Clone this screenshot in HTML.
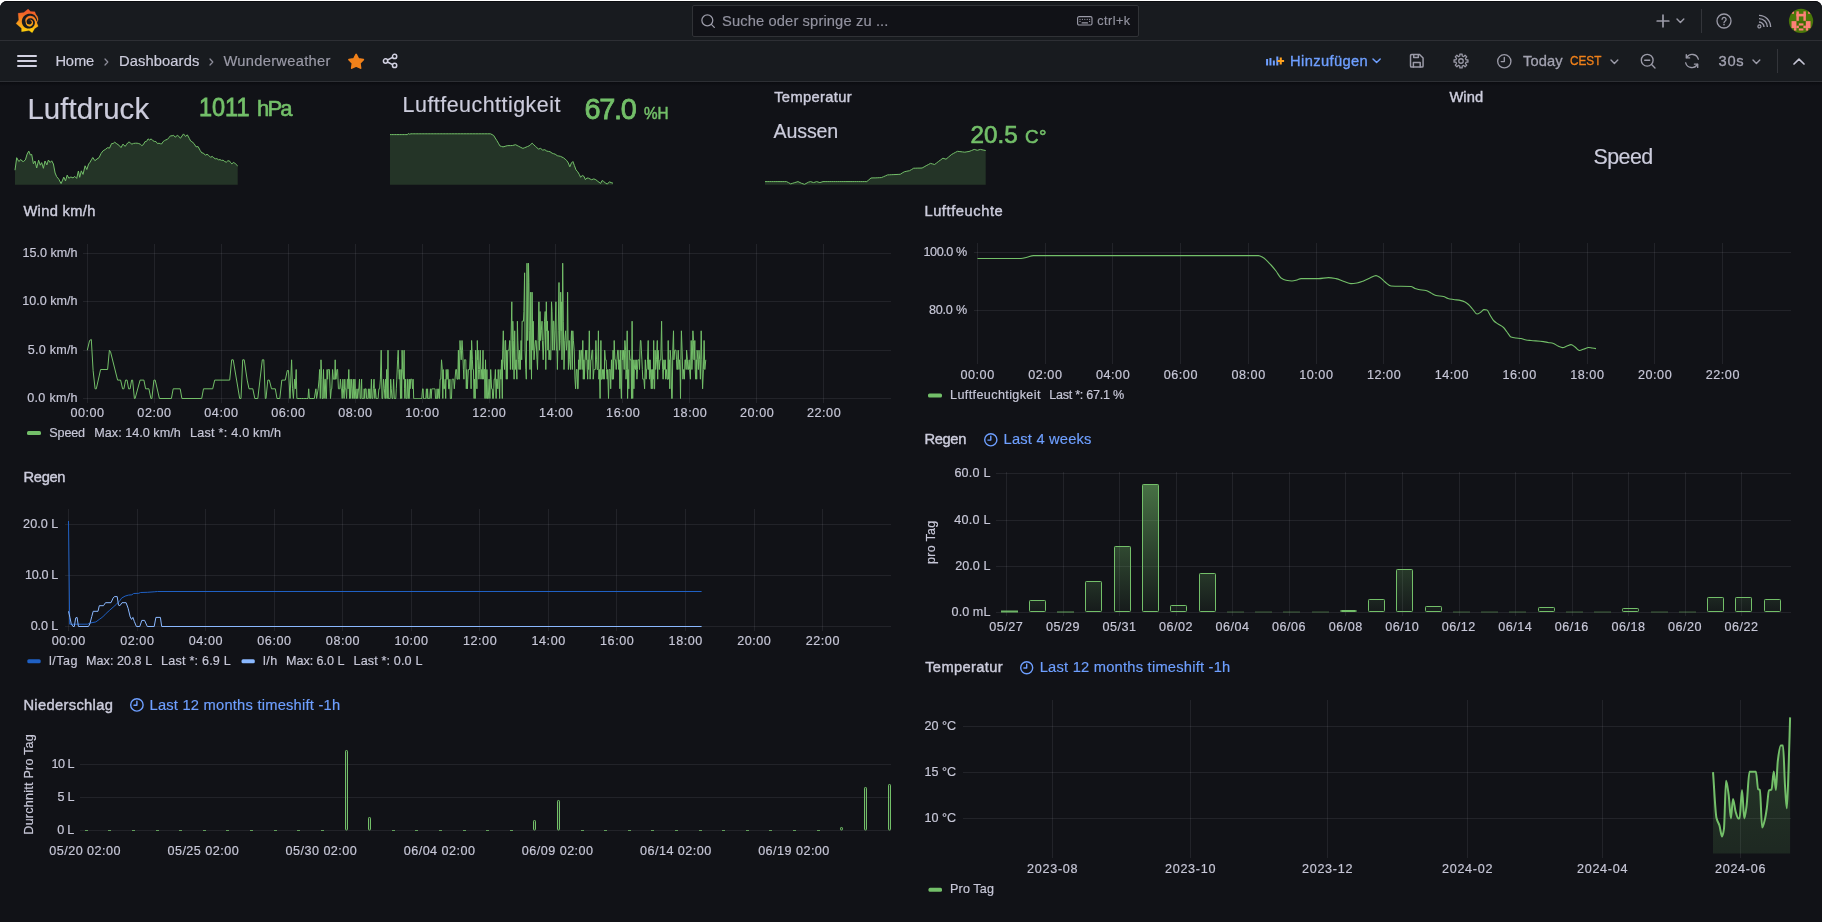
<!DOCTYPE html>
<html lang="de"><head><meta charset="utf-8"><title>Wunderweather - Dashboards - Grafana</title>
<style>
html,body{margin:0;padding:0}
body{width:1822px;height:922px;overflow:hidden;background:#fff;font-family:"Liberation Sans",sans-serif;position:relative}
#app{position:absolute;left:0;top:0;width:1822px;height:922px;overflow:hidden}
#bg{position:absolute;left:0;top:1px;width:1822px;height:921px;background:#111217;border-radius:7px 7px 0 0}
#tx{position:absolute;left:0;top:0;width:1822px;height:922px;will-change:transform}
.t{position:absolute;white-space:pre;line-height:1;}
svg{overflow:visible}
</style></head>
<body>
<div id="app">
<div id="bg"></div>
<div style="position:absolute;left:0;top:1px;width:1822px;height:80px;background:#181b1f;border-top:1px solid #0b0c0f;border-radius:7px 7px 0 0;box-sizing:border-box"></div>
<div style="position:absolute;left:0;top:40px;width:1822px;height:1px;background:#2d2f34"></div>
<div style="position:absolute;left:0;top:81px;width:1822px;height:1px;background:#2d2f34"></div>
<div style="position:absolute;left:0;top:82px;width:1822px;height:4px;background:linear-gradient(#0b0c10,#111217)"></div>
<svg style="position:absolute;left:16px;top:9px" width="24" height="24" viewBox="0 0 922 922">
<defs><linearGradient id="lg" x1="0" y1="0" x2="0" y2="1"><stop offset="0.12" stop-color="#f15b2a"/><stop offset="0.55" stop-color="#f7941d"/><stop offset="0.95" stop-color="#fdd00a"/></linearGradient></defs>
<polygon points="465,4 560,95 722,105 762,200 830,300 852,390 838,448 800,525 852,665 722,745 622,915 500,830 215,870 210,740 2,560 105,420 80,160 300,135" fill="url(#lg)" stroke="url(#lg)" stroke-width="8" stroke-linejoin="round"/>
<path d="M900 454 L816 468 L813 426 L804 384 L788 342 L766 303 L738 267 L705 235 L666 210 L623 194 L578 184 L532 180 L486 184 L441 194 L399 210 L359 232 L324 259 L292 290 L267 326 L247 365 L234 406 L226 447 L224 489 L228 530 L238 570 L254 607 L274 641 L299 671 L327 697 L358 718 L390 734 L425 746 L460 752 L494 753 L528 750 L561 743 L592 731 L620 716 L646 697 L668 675 L687 650 L703 624 L715 597 L722 568 L726 539 L725 510 L719 482 L709 456 L696 432 L680 410 L661 391 L640 376 L618 365 L594 357 L571 353 L548 353 L525 356 L504 361 L485 368 L467 378 L451 390 L437 404 L426 419 L417 435 L411 452 L407 469 L405 486 L407 502 L410 518 L415 532 L422 546 L431 557 L442 566 L455 573 L467 577 L480 579 L520 510 L517 514 L512 517 L507 519 L501 520 L495 519 L489 517 L483 513 L478 507 L474 500 L472 493 L471 484 L471 475 L474 465 L477 456 L483 446 L491 437 L500 430 L511 423 L523 418 L537 414 L551 413 L567 414 L582 418 L598 424 L612 433 L624 445 L635 459 L644 474 L651 492 L655 510 L656 529 L655 549 L651 568 L644 587 L634 605 L621 622 L606 637 L589 651 L569 661 L548 669 L526 674 L503 673 L481 667 L460 659 L440 648 L423 634 L408 618 L396 600 L386 581 L379 561 L375 541 L374 520 L370 500 L362 476 L358 451 L358 424 L363 396 L372 367 L389 342 L410 319 L435 300 L463 283 L495 271 L529 263 L564 262 L599 267 L634 276 L667 292 L696 314 L722 340 L745 370 L763 402 L776 437 L784 473 L900 477Z" fill="#181b1f"/>
<circle cx="515" cy="508" r="90" fill="#181b1f"/>
</svg>
<div style="position:absolute;left:692px;top:5px;width:447px;height:32px;box-sizing:border-box;border:1px solid #303236;border-radius:2px;background:#111217"></div>
<svg style="position:absolute;left:699.8px;top:12.6px" width="16" height="16" viewBox="0 0 24 24" fill="none" stroke="#9b9ba8" stroke-width="1.9" stroke-linecap="round" stroke-linejoin="round" ><circle cx="11" cy="11" r="8.2"/><path d="M17 17 L21.5 21.5"/></svg>
<svg style="position:absolute;left:1077px;top:16.3px" width="15.6" height="9.6" viewBox="0 0 26 16" fill="none" stroke="#9b9ba8" stroke-width="1.9" stroke-linecap="round" stroke-linejoin="round" ><rect x="1" y="1" width="24" height="14" rx="2.5"/><path d="M5 5.5h.1M9 5.5h.1M13 5.5h.1M17 5.5h.1M21 5.5h.1M5 9h.1M21 9h.1M8.5 11.5h9" stroke-width="2"/></svg>
<svg style="position:absolute;left:1656px;top:14px" width="14" height="14" viewBox="0 0 14 14" fill="none" stroke="#9b9ba8" stroke-width="1.7" stroke-linecap="round" stroke-linejoin="round" ><path d="M7 1.2V12.8M1.2 7H12.8"/></svg>
<svg style="position:absolute;left:1675.6px;top:18.4px" width="8.8" height="5.6" viewBox="-1 -1 8.8 5.6" fill="none" stroke="#9b9ba8" stroke-width="1.45" stroke-linecap="round" stroke-linejoin="round"><path d="M0 0 L3.4 3.4 L6.8 0"/></svg>
<div style="position:absolute;left:1701px;top:9px;width:1px;height:24px;background:#33353a"></div>
<svg style="position:absolute;left:1716px;top:13px" width="16" height="16" viewBox="0 0 16 16" fill="none" stroke="#9b9ba8" stroke-width="1.3" stroke-linecap="round" stroke-linejoin="round" ><circle cx="8" cy="8" r="7"/><path d="M6.1 6.3a2 2 0 1 1 2.9 1.9c-.7.4-1 .8-1 1.5" stroke-width="1.3"/><path d="M8 11.6v.1" stroke-width="1.5"/></svg>
<svg style="position:absolute;left:1755.5px;top:14px" width="16" height="16" viewBox="0 0 16 16" fill="none" stroke="#9b9ba8" stroke-width="1.4" stroke-linecap="round" stroke-linejoin="round" ><circle cx="3.4" cy="12.4" r="1.5" stroke-width="1.2"/><path d="M3 8a5 5 0 0 1 5 5M3 4.6a8.4 8.4 0 0 1 8.4 8.4M3 1.4A11.6 11.6 0 0 1 14.6 13" stroke-linecap="butt"/></svg>
<svg style="position:absolute;left:1786px;top:6px" width="30" height="30" viewBox="0 0 922 922"><defs><clipPath id="av"><circle cx="462" cy="460" r="373"/></clipPath></defs><g clip-path="url(#av)"><rect width="922" height="922" fill="#4a7709"/><path d="M350 590V520Q350 490 380 490H550Q580 490 580 520V590" fill="none" stroke="#3f6a05" stroke-width="50"/><rect x="395" y="600" width="140" height="90" fill="#3c6b00"/><g fill="#ff8078"><rect x="175" y="165" width="70" height="75"/><rect x="680" y="165" width="70" height="75"/><rect x="320" y="165" width="75" height="290"/><rect x="535" y="165" width="75" height="290"/><rect x="320" y="240" width="290" height="80"/><rect x="170" y="465" width="150" height="215"/><rect x="320" y="605" width="75" height="75"/><rect x="245" y="680" width="75" height="75"/><rect x="610" y="465" width="145" height="215"/><rect x="535" y="605" width="75" height="75"/><rect x="610" y="680" width="70" height="75"/><rect x="395" y="535" width="140" height="65"/><rect x="395" y="690" width="140" height="62"/></g></g></svg>
<div style="position:absolute;left:17px;top:55.2px;width:20px;height:2px;background:#d2d2e2;border-radius:1px"></div>
<div style="position:absolute;left:17px;top:60.1px;width:20px;height:2px;background:#d2d2e2;border-radius:1px"></div>
<div style="position:absolute;left:17px;top:65.1px;width:20px;height:2px;background:#d2d2e2;border-radius:1px"></div>
<svg style="position:absolute;left:104.0px;top:57.6px" width="5.0" height="8.0" viewBox="-1 -1 5.0 8.0" fill="none" stroke="#8e8e9b" stroke-width="1.25" stroke-linecap="round" stroke-linejoin="round"><path d="M0 0 L2.8 3.0 L0 6.0"/></svg>
<svg style="position:absolute;left:209.2px;top:57.6px" width="5.0" height="8.0" viewBox="-1 -1 5.0 8.0" fill="none" stroke="#8e8e9b" stroke-width="1.25" stroke-linecap="round" stroke-linejoin="round"><path d="M0 0 L2.8 3.0 L0 6.0"/></svg>
<svg style="position:absolute;left:340px;top:46px" width="34" height="30" viewBox="0 0 34 30"><path d="M16.15 8.45 L18.44 12.84 L23.33 13.67 L19.86 17.21 L20.59 22.11 L16.15 19.90 L11.71 22.11 L12.44 17.21 L8.97 13.67 L13.86 12.84Z" fill="#f0811a" stroke="#f0811a" stroke-width="1.7" stroke-linejoin="round"/></svg>
<svg style="position:absolute;left:381.8px;top:53px" width="16" height="16" viewBox="0 0 16 16" fill="none" stroke="#d2d2e2" stroke-width="1.5" stroke-linecap="round" stroke-linejoin="round" ><circle cx="12.6" cy="3.45" r="2.15"/><circle cx="3.55" cy="8" r="2.15"/><circle cx="12.6" cy="12.45" r="2.15"/><path d="M5.5 7l5.1-2.6M5.5 9l5.1 2.6"/></svg>
<svg style="position:absolute;left:1265px;top:54px" width="20" height="14" viewBox="0 0 20 14"><g stroke="#6e9fff" stroke-width="2" stroke-linecap="butt"><path d="M2.1 5.1V11.6M5.45 3.9V11.6M8.85 6.6V11.6M12.3 2.4V11.6"/></g><path d="M15.75 3.6V10.4M12.4 7H19.1" stroke="#ffa21f" stroke-width="2.1" stroke-linecap="butt"/></svg>
<svg style="position:absolute;left:1372.4px;top:58.25px" width="9.2" height="5.7" viewBox="-1 -1 9.2 5.7" fill="none" stroke="#6e9fff" stroke-width="1.5" stroke-linecap="round" stroke-linejoin="round"><path d="M0 0 L3.6 3.5 L7.2 0"/></svg>
<svg style="position:absolute;left:1408.2px;top:52.2px" width="17.6" height="17.6" viewBox="0 0 16 16" fill="none" stroke="#9b9ba8" stroke-width="1.35" stroke-linecap="round" stroke-linejoin="round" ><path d="M2.3 3.3a1 1 0 0 1 1-1h7.2l3.2 3.2v7.2a1 1 0 0 1-1 1H3.3a1 1 0 0 1-1-1z"/><path d="M5.2 2.5v2.6h4.2v-2.6M4.9 13.6V9.5h6.2v4.1"/></svg>
<svg style="position:absolute;left:1453.05px;top:53.05px" width="16" height="16" viewBox="0 0 16 16" fill="none" stroke="#9b9ba8" stroke-width="1.3" stroke-linecap="round" stroke-linejoin="round" ><path d="M6.80 2.99 L6.84 1.05 L9.16 1.05 L9.20 2.99 L10.69 3.61 L12.09 2.26 L13.74 3.91 L12.39 5.31 L13.01 6.80 L14.95 6.84 L14.95 9.16 L13.01 9.20 L12.39 10.69 L13.74 12.09 L12.09 13.74 L10.69 12.39 L9.20 13.01 L9.16 14.95 L6.84 14.95 L6.80 13.01 L5.31 12.39 L3.91 13.74 L2.26 12.09 L3.61 10.69 L2.99 9.20 L1.05 9.16 L1.05 6.84 L2.99 6.80 L3.61 5.31 L2.26 3.91 L3.91 2.26 L5.31 3.61Z" stroke-width="1.25"/><circle cx="8" cy="8" r="2.25" stroke-width="1.3"/></svg>
<svg style="position:absolute;left:1496.2px;top:52.7px" width="16.6" height="16.6" viewBox="-8.3 -8.3 16.6 16.6" fill="none" stroke="#9b9ba8" stroke-width="1.35" stroke-linecap="round" stroke-linejoin="round"><circle cx="0" cy="0" r="6.625"/><path d="M0 -3.796 V0.3 H-3.066"/></svg>
<svg style="position:absolute;left:1610.0px;top:58.6px" width="8.8" height="5.6" viewBox="-1 -1 8.8 5.6" fill="none" stroke="#9b9ba8" stroke-width="1.45" stroke-linecap="round" stroke-linejoin="round"><path d="M0 0 L3.4 3.4 L6.8 0"/></svg>
<svg style="position:absolute;left:1640px;top:53px" width="16" height="16" viewBox="0 0 16 16" fill="none" stroke="#9b9ba8" stroke-width="1.35" stroke-linecap="round" stroke-linejoin="round" ><circle cx="7.2" cy="7.2" r="5.9"/><path d="M11.6 11.6L15 15M4.7 7.2h5"/></svg>
<svg style="position:absolute;left:1683.5px;top:53px" width="16" height="16" viewBox="0 0 16 16" fill="none" stroke="#9b9ba8" stroke-width="1.35" stroke-linecap="round" stroke-linejoin="round" ><path d="M14.3 6.2A6.4 6.4 0 0 0 2.6 4.6M1.7 9.8a6.4 6.4 0 0 0 11.7 1.6"/><path d="M2.3 1.6v3.3h3.3M13.7 14.4v-3.3h-3.3"/></svg>
<svg style="position:absolute;left:1751.8px;top:58.6px" width="8.8" height="5.6" viewBox="-1 -1 8.8 5.6" fill="none" stroke="#9b9ba8" stroke-width="1.45" stroke-linecap="round" stroke-linejoin="round"><path d="M0 0 L3.4 3.4 L6.8 0"/></svg>
<div style="position:absolute;left:1777px;top:49px;width:1px;height:24px;background:#33353a"></div>
<svg style="position:absolute;left:1792px;top:56px" width="14" height="10" viewBox="0 0 14 10" fill="none" stroke="#c4c4d4" stroke-width="1.7" stroke-linecap="round" stroke-linejoin="round"><path d="M2 8L7 3.2L12 8"/></svg>
<svg style="position:absolute;left:0;top:0" width="1822" height="922" viewBox="0 0 1822 922">
<polygon points="15.0,184.7 15.0,170.2 16.7,157.7 18.8,161.5 20.9,159.5 22.1,161.1 23.4,161.5 25.4,159.9 27.1,154.1 28.8,151.1 30.4,155.0 31.7,154.4 33.4,163.8 35.0,161.0 36.7,168.0 38.6,160.2 40.3,165.2 41.7,162.6 43.4,168.3 45.0,161.0 46.9,164.9 48.4,160.0 50.1,162.5 51.7,160.8 53.4,164.0 55.1,173.0 56.7,176.7 58.8,179.2 61.1,183.6 62.6,180.1 63.8,177.1 65.5,180.9 67.2,175.1 68.8,178.2 70.9,177.0 73.0,177.9 74.7,176.4 76.7,178.4 78.4,171.0 79.7,177.3 81.3,170.8 83.0,174.4 85.1,165.8 86.8,169.5 88.6,164.1 90.0,162.3 91.4,159.8 92.8,157.5 94.9,160.7 97.0,159.0 99.1,157.6 101.1,153.4 103.2,150.7 105.3,149.5 107.4,147.7 109.5,148.1 111.6,143.6 113.1,143.5 114.7,142.2 116.8,143.8 118.9,145.2 121.0,147.6 123.0,144.1 125.1,146.4 126.4,144.7 127.6,143.0 129.0,141.9 130.3,142.9 131.9,144.2 133.5,143.4 135.6,143.2 137.1,143.2 138.7,143.5 140.3,144.2 141.8,145.6 143.4,144.6 144.9,141.7 146.5,141.4 148.1,138.9 149.6,140.0 151.2,138.9 152.8,140.6 154.3,141.4 155.9,141.5 157.5,143.6 159.0,143.2 160.6,143.8 161.8,143.8 163.1,141.6 164.4,140.7 165.8,139.9 167.4,139.4 168.9,137.7 170.5,135.8 172.1,135.8 173.6,135.3 175.2,137.2 177.3,135.4 178.8,136.3 180.4,138.3 182.0,136.0 183.5,133.9 185.6,136.5 187.3,134.8 189.4,138.6 190.6,140.9 191.9,141.7 194.0,143.5 196.0,146.8 198.1,146.6 200.2,150.5 201.8,152.9 203.3,153.0 205.4,155.2 207.0,154.3 208.6,155.3 210.6,157.3 212.2,156.4 213.8,157.8 215.3,158.8 216.9,158.6 218.5,159.8 220.0,159.6 221.6,160.4 223.1,160.2 224.7,161.5 226.3,162.2 227.8,160.8 229.4,160.9 230.7,162.7 231.9,163.9 233.3,162.5 234.6,162.9 236.2,164.6 237.7,165.9 237.7,184.7" fill="#73bf69" fill-opacity="0.2"/><polyline points="15.0,170.2 16.7,157.7 18.8,161.5 20.9,159.5 22.1,161.1 23.4,161.5 25.4,159.9 27.1,154.1 28.8,151.1 30.4,155.0 31.7,154.4 33.4,163.8 35.0,161.0 36.7,168.0 38.6,160.2 40.3,165.2 41.7,162.6 43.4,168.3 45.0,161.0 46.9,164.9 48.4,160.0 50.1,162.5 51.7,160.8 53.4,164.0 55.1,173.0 56.7,176.7 58.8,179.2 61.1,183.6 62.6,180.1 63.8,177.1 65.5,180.9 67.2,175.1 68.8,178.2 70.9,177.0 73.0,177.9 74.7,176.4 76.7,178.4 78.4,171.0 79.7,177.3 81.3,170.8 83.0,174.4 85.1,165.8 86.8,169.5 88.6,164.1 90.0,162.3 91.4,159.8 92.8,157.5 94.9,160.7 97.0,159.0 99.1,157.6 101.1,153.4 103.2,150.7 105.3,149.5 107.4,147.7 109.5,148.1 111.6,143.6 113.1,143.5 114.7,142.2 116.8,143.8 118.9,145.2 121.0,147.6 123.0,144.1 125.1,146.4 126.4,144.7 127.6,143.0 129.0,141.9 130.3,142.9 131.9,144.2 133.5,143.4 135.6,143.2 137.1,143.2 138.7,143.5 140.3,144.2 141.8,145.6 143.4,144.6 144.9,141.7 146.5,141.4 148.1,138.9 149.6,140.0 151.2,138.9 152.8,140.6 154.3,141.4 155.9,141.5 157.5,143.6 159.0,143.2 160.6,143.8 161.8,143.8 163.1,141.6 164.4,140.7 165.8,139.9 167.4,139.4 168.9,137.7 170.5,135.8 172.1,135.8 173.6,135.3 175.2,137.2 177.3,135.4 178.8,136.3 180.4,138.3 182.0,136.0 183.5,133.9 185.6,136.5 187.3,134.8 189.4,138.6 190.6,140.9 191.9,141.7 194.0,143.5 196.0,146.8 198.1,146.6 200.2,150.5 201.8,152.9 203.3,153.0 205.4,155.2 207.0,154.3 208.6,155.3 210.6,157.3 212.2,156.4 213.8,157.8 215.3,158.8 216.9,158.6 218.5,159.8 220.0,159.6 221.6,160.4 223.1,160.2 224.7,161.5 226.3,162.2 227.8,160.8 229.4,160.9 230.7,162.7 231.9,163.9 233.3,162.5 234.6,162.9 236.2,164.6 237.7,165.9" fill="none" stroke="#73bf69" stroke-width="1" stroke-linejoin="round"/>
<polygon points="390.0,184.7 390.0,134.6 391.6,134.6 393.2,134.6 394.8,134.6 396.4,134.6 398.0,134.6 399.6,134.6 401.2,134.6 402.8,134.6 404.3,134.6 405.9,134.6 407.5,134.6 408.2,133.6 409.6,134.2 410.9,133.8 412.4,133.8 413.9,133.8 415.4,133.8 416.9,133.8 418.4,133.8 419.9,133.8 421.4,133.8 422.9,133.8 424.4,133.8 425.9,133.8 427.4,133.8 428.9,133.8 430.4,133.8 431.9,133.8 433.4,133.8 434.9,133.8 436.4,133.8 437.9,133.8 439.4,133.8 440.9,133.8 442.4,133.8 443.9,133.8 445.4,133.8 446.9,133.8 448.4,133.8 449.9,133.8 451.5,133.8 453.0,133.8 454.5,133.8 456.0,133.8 457.5,133.8 459.0,133.8 460.5,133.8 462.0,133.8 463.5,133.8 465.0,133.8 466.5,133.8 468.0,133.8 469.5,133.8 471.0,133.8 472.5,133.8 474.0,133.8 475.5,133.8 477.0,133.8 478.5,133.8 480.0,133.8 481.5,133.8 483.0,133.8 484.5,133.8 486.0,133.8 487.5,133.8 489.0,133.8 490.5,133.8 492.1,134.6 493.7,135.5 495.2,138.0 496.8,140.5 498.4,143.2 499.9,145.9 501.5,146.4 503.0,146.9 505.1,146.3 507.2,145.7 509.0,145.6 510.7,145.6 512.4,145.5 514.0,145.1 515.6,144.7 517.1,145.5 518.7,146.3 520.8,147.4 522.9,148.4 524.4,147.8 526.0,147.2 527.5,146.5 529.1,145.9 530.7,144.5 532.2,143.2 533.8,144.8 535.4,146.3 536.9,147.7 538.5,149.0 540.6,148.4 542.7,150.1 544.8,149.7 546.8,151.1 548.4,151.4 550.0,151.7 552.1,153.2 553.6,153.7 555.2,154.2 557.3,155.7 558.8,156.0 560.4,156.3 562.0,157.1 563.5,157.8 565.1,159.1 566.7,160.5 568.3,163.0 569.8,166.8 571.4,163.0 572.9,161.5 574.4,165.5 576.0,169.9 577.7,171.8 579.2,174.3 580.6,177.2 582.3,175.5 584.0,176.4 585.4,179.7 586.9,178.0 588.6,178.2 590.1,179.0 591.7,179.7 593.8,178.9 595.8,179.7 597.9,181.4 600.6,183.4 602.1,180.5 603.6,181.4 605.2,182.8 607.3,184.1 609.4,181.8 611.1,182.6 613.0,183.2 613.0,184.7" fill="#73bf69" fill-opacity="0.2"/><polyline points="390.0,134.6 391.6,134.6 393.2,134.6 394.8,134.6 396.4,134.6 398.0,134.6 399.6,134.6 401.2,134.6 402.8,134.6 404.3,134.6 405.9,134.6 407.5,134.6 408.2,133.6 409.6,134.2 410.9,133.8 412.4,133.8 413.9,133.8 415.4,133.8 416.9,133.8 418.4,133.8 419.9,133.8 421.4,133.8 422.9,133.8 424.4,133.8 425.9,133.8 427.4,133.8 428.9,133.8 430.4,133.8 431.9,133.8 433.4,133.8 434.9,133.8 436.4,133.8 437.9,133.8 439.4,133.8 440.9,133.8 442.4,133.8 443.9,133.8 445.4,133.8 446.9,133.8 448.4,133.8 449.9,133.8 451.5,133.8 453.0,133.8 454.5,133.8 456.0,133.8 457.5,133.8 459.0,133.8 460.5,133.8 462.0,133.8 463.5,133.8 465.0,133.8 466.5,133.8 468.0,133.8 469.5,133.8 471.0,133.8 472.5,133.8 474.0,133.8 475.5,133.8 477.0,133.8 478.5,133.8 480.0,133.8 481.5,133.8 483.0,133.8 484.5,133.8 486.0,133.8 487.5,133.8 489.0,133.8 490.5,133.8 492.1,134.6 493.7,135.5 495.2,138.0 496.8,140.5 498.4,143.2 499.9,145.9 501.5,146.4 503.0,146.9 505.1,146.3 507.2,145.7 509.0,145.6 510.7,145.6 512.4,145.5 514.0,145.1 515.6,144.7 517.1,145.5 518.7,146.3 520.8,147.4 522.9,148.4 524.4,147.8 526.0,147.2 527.5,146.5 529.1,145.9 530.7,144.5 532.2,143.2 533.8,144.8 535.4,146.3 536.9,147.7 538.5,149.0 540.6,148.4 542.7,150.1 544.8,149.7 546.8,151.1 548.4,151.4 550.0,151.7 552.1,153.2 553.6,153.7 555.2,154.2 557.3,155.7 558.8,156.0 560.4,156.3 562.0,157.1 563.5,157.8 565.1,159.1 566.7,160.5 568.3,163.0 569.8,166.8 571.4,163.0 572.9,161.5 574.4,165.5 576.0,169.9 577.7,171.8 579.2,174.3 580.6,177.2 582.3,175.5 584.0,176.4 585.4,179.7 586.9,178.0 588.6,178.2 590.1,179.0 591.7,179.7 593.8,178.9 595.8,179.7 597.9,181.4 600.6,183.4 602.1,180.5 603.6,181.4 605.2,182.8 607.3,184.1 609.4,181.8 611.1,182.6 613.0,183.2" fill="none" stroke="#73bf69" stroke-width="1" stroke-linejoin="round"/>
<polygon points="765.0,184.7 765.0,181.6 767.2,181.6 769.3,181.6 771.5,181.6 773.6,181.6 775.8,181.6 777.9,181.6 780.1,181.6 782.2,181.6 784.3,181.6 786.5,181.6 788.6,182.7 790.7,183.9 792.8,183.2 794.8,182.6 798.0,181.6 801.7,183.4 804.6,184.3 808.4,182.2 810.5,181.6 813.6,182.6 816.7,181.6 819.9,182.6 823.0,181.6 825.1,181.6 827.2,181.6 829.2,181.6 831.3,181.6 833.4,181.6 835.5,181.6 837.6,181.6 839.7,181.6 841.8,181.6 843.8,181.6 845.9,181.6 848.0,181.6 850.1,181.6 852.2,181.6 854.3,181.6 856.4,181.6 858.4,181.6 860.5,181.6 862.6,181.6 864.7,181.6 866.8,181.6 868.9,179.8 871.0,178.0 873.0,177.9 875.1,177.9 877.2,177.8 879.3,177.7 881.4,177.6 883.5,176.7 885.6,175.8 887.6,174.9 889.7,174.8 891.8,174.7 893.9,174.6 896.0,174.5 898.1,174.4 900.2,174.3 902.2,173.0 904.3,171.8 906.9,171.2 909.5,170.7 911.6,169.5 913.7,168.2 915.8,168.2 917.9,168.1 920.0,168.1 922.1,168.0 924.1,166.9 926.2,165.7 928.3,164.6 930.4,163.4 932.5,163.9 934.6,164.5 936.7,162.9 938.7,161.3 940.8,159.8 942.9,158.2 946.0,159.2 948.6,157.0 951.3,154.7 953.3,153.5 955.4,152.4 957.5,151.3 959.9,151.6 962.4,151.9 964.8,152.2 966.9,151.8 969.0,151.5 971.6,150.5 974.2,149.4 977.3,150.3 980.4,149.4 983.1,150.0 985.7,150.5 985.7,184.7" fill="#73bf69" fill-opacity="0.2"/><polyline points="765.0,181.6 767.2,181.6 769.3,181.6 771.5,181.6 773.6,181.6 775.8,181.6 777.9,181.6 780.1,181.6 782.2,181.6 784.3,181.6 786.5,181.6 788.6,182.7 790.7,183.9 792.8,183.2 794.8,182.6 798.0,181.6 801.7,183.4 804.6,184.3 808.4,182.2 810.5,181.6 813.6,182.6 816.7,181.6 819.9,182.6 823.0,181.6 825.1,181.6 827.2,181.6 829.2,181.6 831.3,181.6 833.4,181.6 835.5,181.6 837.6,181.6 839.7,181.6 841.8,181.6 843.8,181.6 845.9,181.6 848.0,181.6 850.1,181.6 852.2,181.6 854.3,181.6 856.4,181.6 858.4,181.6 860.5,181.6 862.6,181.6 864.7,181.6 866.8,181.6 868.9,179.8 871.0,178.0 873.0,177.9 875.1,177.9 877.2,177.8 879.3,177.7 881.4,177.6 883.5,176.7 885.6,175.8 887.6,174.9 889.7,174.8 891.8,174.7 893.9,174.6 896.0,174.5 898.1,174.4 900.2,174.3 902.2,173.0 904.3,171.8 906.9,171.2 909.5,170.7 911.6,169.5 913.7,168.2 915.8,168.2 917.9,168.1 920.0,168.1 922.1,168.0 924.1,166.9 926.2,165.7 928.3,164.6 930.4,163.4 932.5,163.9 934.6,164.5 936.7,162.9 938.7,161.3 940.8,159.8 942.9,158.2 946.0,159.2 948.6,157.0 951.3,154.7 953.3,153.5 955.4,152.4 957.5,151.3 959.9,151.6 962.4,151.9 964.8,152.2 966.9,151.8 969.0,151.5 971.6,150.5 974.2,149.4 977.3,150.3 980.4,149.4 983.1,150.0 985.7,150.5" fill="none" stroke="#73bf69" stroke-width="1" stroke-linejoin="round"/>
</svg>
<svg style="position:absolute;left:0;top:0" width="1822" height="922" viewBox="0 0 1822 922">
<g stroke="rgba(225,230,245,0.082)" stroke-width="1" fill="none"><path d="M87.5 244V403"/><path d="M154.5 244V403"/><path d="M221.5 244V403"/><path d="M288.5 244V403"/><path d="M355.5 244V403"/><path d="M422.5 244V403"/><path d="M489.5 244V403"/><path d="M555.5 244V403"/><path d="M622.5 244V403"/><path d="M689.5 244V403"/><path d="M756.5 244V403"/><path d="M823.5 244V403"/><path d="M83 398.5H891"/><path d="M83 350.5H891"/><path d="M83 301.5H891"/><path d="M83 253.5H891"/></g>
<polyline points="87.3,350.2 89.6,340.5 91.3,339.5 93.1,370.5 95.1,388.8 96.3,388.8 100.6,369.5 107.6,369.5 109.4,350.2 110.6,352.1 117.6,380.1 120.6,380.1 122.6,388.8 123.9,388.8 125.6,380.1 127.1,380.1 128.6,388.8 130.1,388.8 131.6,380.1 132.6,380.1 134.4,398.5 135.1,398.5 140.1,380.1 143.9,380.1 145.6,388.8 148.9,388.8 150.9,398.5 151.9,398.5 153.9,380.1 155.2,380.1 159.4,398.5 171.4,398.5 173.2,388.8 180.2,388.8 181.9,398.5 201.7,398.5 203.5,388.8 212.7,388.8 214.7,380.1 229.7,380.1 231.7,359.8 233.2,359.8 239.7,398.5 241.0,398.5 242.7,359.8 244.2,359.8 247.2,380.1 249.0,388.8 252.8,388.8 254.8,398.5 257.8,398.5 262.3,359.8 263.8,359.8 265.3,398.5 266.0,398.5 267.8,380.1 269.3,380.1 271.5,388.8 275.3,388.8 277.0,398.5 279.8,398.5 281.8,380.1 285.3,380.1 287.3,370.5 288.5,370.5 290.0,398.5 291.6,359.8 292.5,388.8 293.4,398.5 294.6,379.2 295.3,388.8 296.2,369.5 296.9,398.5 297.8,398.5 299.0,398.5 299.9,398.5 301.1,398.5 301.8,398.5 303.0,398.5 303.7,398.5 304.9,398.5 306.1,398.5 306.8,398.5 308.0,398.5 308.7,388.8 309.4,398.5 311.0,398.5 311.9,398.5 313.1,398.5 314.3,398.5 315.9,388.8 316.6,398.5 318.2,388.8 319.1,379.2 319.6,369.5 320.3,398.5 321.0,359.8 321.8,379.2 322.2,398.5 323.0,398.5 323.5,369.5 324.1,398.5 324.9,379.2 325.3,379.2 325.8,398.5 326.4,398.5 327.1,369.5 327.6,379.2 328.1,369.5 328.6,369.5 329.4,369.5 330.1,388.8 330.5,398.5 331.3,388.8 331.8,388.8 332.6,369.5 333.4,379.2 333.9,379.2 334.7,379.2 335.2,359.8 335.6,379.2 336.1,379.2 336.9,369.5 337.6,369.5 338.4,388.8 338.8,388.8 339.4,388.8 339.8,388.8 340.4,379.2 341.2,388.8 341.6,388.8 342.2,398.5 342.9,379.2 343.3,388.8 344.1,398.5 344.8,379.2 345.2,388.8 345.8,388.8 346.6,398.5 347.3,379.2 347.7,379.2 348.1,388.8 348.8,369.5 349.5,398.5 349.9,379.2 350.7,398.5 351.3,379.2 352.0,388.8 352.6,398.5 353.3,379.2 353.8,398.5 354.4,398.5 354.9,379.2 355.3,388.8 355.8,398.5 356.5,398.5 357.0,388.8 357.7,398.5 358.5,388.8 358.9,388.8 359.5,379.2 360.1,398.5 360.8,398.5 361.2,388.8 361.6,379.2 362.0,398.5 362.6,398.5 363.1,398.5 363.8,398.5 364.2,388.8 364.7,398.5 365.3,388.8 366.1,388.8 366.6,398.5 367.3,398.5 368.0,398.5 368.4,388.8 369.2,398.5 369.8,388.8 370.3,398.5 370.7,398.5 371.4,379.2 372.0,398.5 372.4,398.5 372.8,398.5 373.4,388.8 374.0,379.2 374.4,388.8 374.8,398.5 375.4,388.8 376.2,398.5 377.0,398.5 377.7,398.5 378.1,398.5 378.9,388.8 379.7,388.8 380.4,379.2 381.2,350.2 382.0,398.5 382.7,398.5 383.5,379.2 384.3,388.8 385.1,398.5 385.5,379.2 385.9,398.5 386.6,369.5 387.3,398.5 388.0,350.2 388.4,398.5 389.2,398.5 389.8,398.5 390.2,398.5 390.7,379.2 391.3,388.8 392.0,398.5 392.8,398.5 393.6,379.2 394.3,398.5 395.0,398.5 395.8,398.5 396.3,388.8 396.8,379.2 397.6,359.8 398.2,350.2 398.8,369.5 399.3,379.2 399.8,369.5 400.5,398.5 401.2,369.5 401.7,398.5 402.1,350.2 402.7,369.5 403.5,379.2 404.1,350.2 404.5,388.8 404.9,398.5 405.7,379.2 406.2,398.5 406.7,398.5 407.2,398.5 407.6,379.2 408.0,379.2 408.6,398.5 409.3,398.5 409.7,379.2 410.1,388.8 410.7,379.2 411.2,379.2 411.8,379.2 412.5,388.8 413.1,379.2 413.7,398.5 414.1,398.5 414.6,398.5 415.3,398.5 415.9,398.5 416.5,398.5 417.0,398.5 417.5,398.5 418.1,398.5 418.5,398.5 419.1,398.5 419.7,398.5 420.3,398.5 421.0,398.5 421.8,398.5 422.6,388.8 423.1,388.8 423.5,398.5 423.9,398.5 424.5,398.5 425.2,398.5 425.8,398.5 426.4,388.8 427.2,398.5 427.6,388.8 428.0,398.5 428.7,398.5 429.2,398.5 429.7,398.5 430.4,388.8 431.1,398.5 431.8,388.8 432.4,388.8 433.0,388.8 433.5,388.8 434.0,388.8 434.6,388.8 435.0,388.8 435.5,398.5 436.2,398.5 436.7,398.5 437.1,388.8 437.6,398.5 438.0,398.5 438.7,388.8 439.5,398.5 440.1,379.2 440.8,379.2 441.5,359.8 442.3,369.5 442.8,398.5 443.2,369.5 443.8,388.8 444.4,388.8 445.2,379.2 445.7,398.5 446.2,369.5 446.7,379.2 447.3,379.2 447.7,369.5 448.1,369.5 448.6,388.8 449.3,388.8 449.9,379.2 450.3,398.5 451.0,398.5 451.5,398.5 452.1,379.2 452.9,379.2 453.7,379.2 454.3,388.8 455.0,379.2 455.8,369.5 456.5,369.5 457.0,379.2 457.8,379.2 458.4,350.2 458.9,379.2 459.3,379.2 460.0,340.5 460.6,350.2 461.2,359.8 462.0,340.5 462.6,350.2 463.4,369.5 463.9,379.2 464.4,359.8 465.2,359.8 465.8,359.8 466.3,388.8 466.7,369.5 467.4,388.8 467.8,379.2 468.4,369.5 468.9,369.5 469.6,369.5 470.4,350.2 471.1,388.8 471.6,340.5 472.4,359.8 472.8,369.5 473.4,369.5 474.1,398.5 474.5,379.2 475.2,398.5 475.7,350.2 476.2,359.8 476.9,388.8 477.3,340.5 477.7,359.8 478.1,350.2 478.5,369.5 478.9,379.2 479.5,369.5 480.3,350.2 481.0,379.2 481.6,369.5 482.4,379.2 483.0,350.2 483.4,379.2 483.9,369.5 484.6,369.5 485.0,398.5 485.5,359.8 486.2,398.5 486.9,369.5 487.5,398.5 488.3,398.5 489.1,379.2 489.9,398.5 490.7,369.5 491.2,379.2 491.6,388.8 492.3,388.8 492.7,398.5 493.3,398.5 493.8,388.8 494.2,379.2 494.9,379.2 495.4,369.5 496.1,398.5 496.7,379.2 497.1,379.2 497.8,388.8 498.2,369.5 498.9,379.2 499.7,398.5 500.1,369.5 500.9,379.2 501.6,359.8 502.3,398.5 502.7,350.2 503.3,330.8 503.9,359.8 504.6,369.5 505.1,340.5 505.6,340.5 506.3,379.2 506.7,350.2 507.2,379.2 507.8,350.2 508.5,350.2 509.0,350.2 509.7,340.5 510.4,369.5 511.0,340.5 511.8,301.8 512.4,369.5 512.8,321.2 513.3,340.5 514.1,379.2 514.7,330.8 515.3,369.5 516.1,359.8 516.9,379.2 517.4,321.2 517.8,340.5 518.5,359.8 519.1,369.5 519.5,350.2 520.3,369.5 521.1,340.5 521.7,359.8 522.1,321.2 522.7,321.2 523.5,321.2 523.9,311.5 524.6,272.8 525.1,350.2 525.8,369.5 526.3,379.2 527.0,263.2 527.7,340.5 528.5,263.2 528.9,282.5 529.3,330.8 530.0,369.5 530.7,292.2 531.5,379.2 532.1,292.2 532.8,350.2 533.2,321.2 534.0,359.8 534.7,350.2 535.5,340.5 536.2,340.5 537.0,359.8 537.5,369.5 538.2,340.5 538.9,301.8 539.5,350.2 540.0,311.5 540.6,340.5 541.3,330.8 542.0,321.2 542.4,340.5 543.2,359.8 543.9,340.5 544.5,321.2 545.2,311.5 545.8,369.5 546.3,301.8 546.9,330.8 547.4,321.2 547.9,350.2 548.3,330.8 549.0,359.8 549.8,350.2 550.2,359.8 550.8,359.8 551.5,301.8 552.0,311.5 552.7,350.2 553.2,321.2 553.8,321.2 554.3,350.2 555.1,330.8 555.9,301.8 556.4,350.2 557.0,350.2 557.4,369.5 558.2,330.8 559.0,282.5 559.6,350.2 560.1,340.5 560.7,292.2 561.2,330.8 561.6,301.8 562.0,359.8 562.7,263.2 563.3,321.2 564.0,369.5 564.8,340.5 565.6,330.8 566.4,350.2 567.1,340.5 567.6,292.2 568.4,369.5 568.8,359.8 569.2,340.5 569.7,359.8 570.5,369.5 571.1,340.5 571.5,330.8 572.3,369.5 572.8,330.8 573.4,340.5 574.2,350.2 575.0,379.2 575.6,388.8 576.4,369.5 577.1,369.5 577.6,388.8 578.1,388.8 578.6,359.8 579.0,369.5 579.4,350.2 580.2,369.5 580.9,350.2 581.5,350.2 582.2,369.5 582.8,340.5 583.3,379.2 583.8,359.8 584.3,379.2 585.0,359.8 585.7,350.2 586.2,359.8 586.8,350.2 587.2,369.5 587.7,379.2 588.2,359.8 588.6,369.5 589.3,330.8 590.1,379.2 590.9,359.8 591.3,359.8 592.0,350.2 592.7,350.2 593.2,379.2 594.0,369.5 594.6,369.5 595.3,369.5 595.9,340.5 596.5,359.8 597.1,369.5 597.8,369.5 598.4,330.8 598.9,379.2 599.4,369.5 600.1,398.5 600.9,340.5 601.3,379.2 602.0,379.2 602.6,369.5 603.2,379.2 603.7,369.5 604.3,379.2 604.7,350.2 605.4,359.8 606.1,359.8 606.5,369.5 607.2,379.2 607.7,369.5 608.5,398.5 609.2,369.5 609.8,369.5 610.2,369.5 610.7,388.8 611.5,359.8 612.1,379.2 612.6,379.2 613.1,350.2 613.5,379.2 614.2,340.5 614.9,359.8 615.6,359.8 616.2,369.5 617.0,359.8 617.7,350.2 618.2,350.2 618.8,369.5 619.3,359.8 619.9,388.8 620.3,350.2 620.7,379.2 621.4,398.5 622.1,350.2 622.7,359.8 623.4,350.2 624.2,369.5 624.9,340.5 625.6,350.2 626.0,379.2 626.6,369.5 627.2,330.8 627.6,398.5 628.1,369.5 628.8,388.8 629.2,350.2 630.0,359.8 630.7,359.8 631.1,359.8 631.5,398.5 632.1,321.2 632.7,398.5 633.2,359.8 633.9,388.8 634.3,369.5 635.0,359.8 635.5,369.5 636.3,359.8 636.9,379.2 637.5,369.5 637.9,359.8 638.4,359.8 639.1,359.8 639.5,369.5 640.0,350.2 640.4,340.5 640.9,340.5 641.4,350.2 641.9,359.8 642.3,369.5 642.8,379.2 643.5,379.2 643.9,379.2 644.6,388.8 645.3,359.8 646.1,379.2 646.5,369.5 647.0,369.5 647.5,359.8 648.2,340.5 648.6,369.5 649.1,359.8 649.5,379.2 650.1,359.8 650.8,379.2 651.3,388.8 651.8,369.5 652.2,388.8 652.7,369.5 653.3,379.2 653.7,340.5 654.1,388.8 654.6,388.8 655.1,350.2 655.7,369.5 656.5,359.8 657.3,340.5 657.7,379.2 658.1,350.2 658.7,359.8 659.3,369.5 660.0,359.8 660.8,359.8 661.6,321.2 662.0,350.2 662.7,369.5 663.1,379.2 663.9,359.8 664.7,369.5 665.2,359.8 665.6,379.2 666.4,369.5 667.0,379.2 667.8,379.2 668.2,340.5 668.6,379.2 669.4,359.8 669.8,388.8 670.2,350.2 670.9,359.8 671.7,398.5 672.2,398.5 672.8,350.2 673.5,330.8 673.9,359.8 674.7,350.2 675.5,350.2 676.0,350.2 676.5,359.8 676.9,369.5 677.4,369.5 678.2,350.2 679.0,369.5 679.4,359.8 680.1,369.5 680.5,398.5 680.9,359.8 681.4,330.8 682.1,350.2 682.9,379.2 683.6,369.5 684.4,379.2 685.0,359.8 685.4,359.8 686.2,369.5 686.6,350.2 687.4,359.8 687.8,369.5 688.4,369.5 689.2,359.8 689.6,369.5 690.4,379.2 691.2,340.5 691.9,369.5 692.3,359.8 692.9,330.8 693.5,340.5 693.9,359.8 694.3,359.8 694.8,340.5 695.2,369.5 695.7,379.2 696.3,359.8 696.7,379.2 697.1,350.2 697.9,359.8 698.4,369.5 699.0,350.2 699.7,359.8 700.4,379.2 701.2,330.8 701.8,359.8 702.6,388.8 703.4,369.5 704.1,340.5 704.8,369.5 705.8,359.8" fill="none" stroke="#73bf69" stroke-width="1" stroke-linejoin="round"/>
<rect x="27" y="431" width="14" height="4" rx="1.5" fill="#73bf69"/>
</svg>
<svg style="position:absolute;left:0;top:0" width="1822" height="922" viewBox="0 0 1822 922">
<g stroke="rgba(225,230,245,0.082)" stroke-width="1" fill="none"><path d="M68.5 509V631"/><path d="M137.5 509V631"/><path d="M205.5 509V631"/><path d="M274.5 509V631"/><path d="M342.5 509V631"/><path d="M411.5 509V631"/><path d="M479.5 509V631"/><path d="M548.5 509V631"/><path d="M616.5 509V631"/><path d="M685.5 509V631"/><path d="M754.5 509V631"/><path d="M822.5 509V631"/><path d="M65 626.5H891"/><path d="M65 575.5H891"/><path d="M65 524.5H891"/></g>
<polyline points="68.5,521.0 69.7,624.2 87.4,624.2 90.8,622.9 95.9,621.9 99.3,619.4 102.8,616.9 106.2,613.3 109.6,610.3 113.1,607.2 116.5,604.2 119.9,600.6 121.6,598.1 125.1,596.1 128.5,595.1 131.9,594.8 133.6,593.5 138.8,593.3 140.5,592.5 147.3,592.3 154.2,591.8 157.6,591.5 701.6,591.5" fill="none" stroke="#1f60c4" stroke-width="1" stroke-linejoin="round"/>
<polyline points="68.5,611.3 69.9,617.4 71.2,623.5 73.0,626.5 74.3,626.5 75.7,617.9 77.1,617.4 78.4,626.5 88.4,626.5 89.8,624.0 91.8,616.4 93.2,611.3 98.0,611.3 99.3,605.7 103.5,605.7 105.5,602.7 111.0,602.7 113.1,598.1 114.4,596.6 117.2,596.6 118.5,605.2 119.9,605.7 122.0,602.7 126.1,602.7 128.1,608.2 130.2,616.9 131.6,619.4 132.9,617.4 134.3,621.4 136.4,626.5 139.8,626.5 141.8,620.4 144.6,620.4 147.3,626.5 154.2,626.5 155.9,617.4 160.4,617.4 161.7,626.5 701.6,626.5" fill="none" stroke="#8ab8ff" stroke-width="1" stroke-linejoin="round"/>
<rect x="27.3" y="659.3" width="13.400000000000002" height="4" rx="1.5" fill="#1f60c4"/>
<rect x="241.5" y="659.3" width="13.300000000000011" height="4" rx="1.5" fill="#8ab8ff"/>
</svg>
<svg style="position:absolute;left:0;top:0" width="1822" height="922" viewBox="0 0 1822 922">
<g stroke="rgba(225,230,245,0.082)" stroke-width="1" fill="none"><path d="M80 830.5H891"/><path d="M80 797.5H891"/><path d="M80 764.5H891"/></g>
<rect x="85" y="830" width="3" height="1" fill="#73bf69" fill-opacity="0.8"/>
<rect x="108" y="830" width="3" height="1" fill="#73bf69" fill-opacity="0.8"/>
<rect x="132" y="830" width="3" height="1" fill="#73bf69" fill-opacity="0.8"/>
<rect x="156" y="830" width="3" height="1" fill="#73bf69" fill-opacity="0.8"/>
<rect x="179" y="830" width="3" height="1" fill="#73bf69" fill-opacity="0.8"/>
<rect x="203" y="830" width="3" height="1" fill="#73bf69" fill-opacity="0.8"/>
<rect x="226" y="830" width="3" height="1" fill="#73bf69" fill-opacity="0.8"/>
<rect x="250" y="830" width="3" height="1" fill="#73bf69" fill-opacity="0.8"/>
<rect x="274" y="830" width="3" height="1" fill="#73bf69" fill-opacity="0.8"/>
<rect x="297" y="830" width="3" height="1" fill="#73bf69" fill-opacity="0.8"/>
<rect x="321" y="830" width="3" height="1" fill="#73bf69" fill-opacity="0.8"/>
<rect x="345.5" y="750.5" width="2" height="79.5" rx="0.7" fill="#73bf69" fill-opacity="0.15" stroke="#73bf69" stroke-width="1"/>
<rect x="368.5" y="817.5" width="2" height="12.5" rx="0.7" fill="#73bf69" fill-opacity="0.15" stroke="#73bf69" stroke-width="1"/>
<rect x="392" y="830" width="3" height="1" fill="#73bf69" fill-opacity="0.8"/>
<rect x="415" y="830" width="3" height="1" fill="#73bf69" fill-opacity="0.8"/>
<rect x="439" y="830" width="3" height="1" fill="#73bf69" fill-opacity="0.8"/>
<rect x="463" y="830" width="3" height="1" fill="#73bf69" fill-opacity="0.8"/>
<rect x="486" y="830" width="3" height="1" fill="#73bf69" fill-opacity="0.8"/>
<rect x="510" y="830" width="3" height="1" fill="#73bf69" fill-opacity="0.8"/>
<rect x="533.5" y="820.5" width="2" height="9.5" rx="0.7" fill="#73bf69" fill-opacity="0.15" stroke="#73bf69" stroke-width="1"/>
<rect x="557.5" y="800.5" width="2" height="29.5" rx="0.7" fill="#73bf69" fill-opacity="0.15" stroke="#73bf69" stroke-width="1"/>
<rect x="581" y="830" width="3" height="1" fill="#73bf69" fill-opacity="0.8"/>
<rect x="604" y="830" width="3" height="1" fill="#73bf69" fill-opacity="0.8"/>
<rect x="628" y="830" width="3" height="1" fill="#73bf69" fill-opacity="0.8"/>
<rect x="651" y="830" width="3" height="1" fill="#73bf69" fill-opacity="0.8"/>
<rect x="675" y="830" width="3" height="1" fill="#73bf69" fill-opacity="0.8"/>
<rect x="699" y="830" width="3" height="1" fill="#73bf69" fill-opacity="0.8"/>
<rect x="722" y="830" width="3" height="1" fill="#73bf69" fill-opacity="0.8"/>
<rect x="746" y="830" width="3" height="1" fill="#73bf69" fill-opacity="0.8"/>
<rect x="769" y="830" width="3" height="1" fill="#73bf69" fill-opacity="0.8"/>
<rect x="793" y="830" width="3" height="1" fill="#73bf69" fill-opacity="0.8"/>
<rect x="817" y="830" width="3" height="1" fill="#73bf69" fill-opacity="0.8"/>
<rect x="840.5" y="827.5" width="2" height="2.5" rx="0.7" fill="#73bf69" fill-opacity="0.15" stroke="#73bf69" stroke-width="1"/>
<rect x="864.5" y="787.5" width="2" height="42.5" rx="0.7" fill="#73bf69" fill-opacity="0.15" stroke="#73bf69" stroke-width="1"/>
<rect x="888.5" y="784.5" width="2" height="45.5" rx="0.7" fill="#73bf69" fill-opacity="0.15" stroke="#73bf69" stroke-width="1"/>
</svg>
<svg style="position:absolute;left:129.1px;top:697.1px" width="15.8" height="15.8" viewBox="-7.9 -7.9 15.8 15.8" fill="none" stroke="#6e9fff" stroke-width="1.4" stroke-linecap="round" stroke-linejoin="round"><circle cx="0" cy="0" r="6.2"/><path d="M0 -3.5880000000000005 V0.3 H-2.898"/></svg>
<svg style="position:absolute;left:0;top:0" width="1822" height="922" viewBox="0 0 1822 922">
<g stroke="rgba(225,230,245,0.082)" stroke-width="1" fill="none"><path d="M977.5 243V364"/><path d="M1045.5 243V364"/><path d="M1112.5 243V364"/><path d="M1180.5 243V364"/><path d="M1248.5 243V364"/><path d="M1316.5 243V364"/><path d="M1383.5 243V364"/><path d="M1451.5 243V364"/><path d="M1519.5 243V364"/><path d="M1587.5 243V364"/><path d="M1654.5 243V364"/><path d="M1722.5 243V364"/><path d="M974 252.5H1791"/><path d="M974 310.5H1791"/></g>
<path d="M977.50 258.50 C992.00 258.50 1006.50 258.50 1021.00 258.50 C1023.00 258.50 1025.00 257.66 1027.00 257.20 C1029.17 256.70 1031.33 255.60 1033.50 255.60 C1108.50 255.60 1183.50 255.60 1258.50 255.60 C1260.00 255.60 1261.50 256.66 1263.00 257.50 C1265.67 259.00 1268.33 262.17 1271.00 265.00 C1272.67 266.77 1274.33 268.85 1276.00 271.00 C1277.67 273.15 1279.33 276.85 1281.00 278.00 C1282.67 279.15 1284.33 279.98 1286.00 280.30 C1288.00 280.68 1290.00 281.00 1292.00 281.00 C1293.67 281.00 1295.33 280.43 1297.00 280.00 C1298.33 279.66 1299.67 278.60 1301.00 278.60 C1306.83 278.60 1312.67 278.60 1318.50 278.60 C1321.83 278.60 1325.17 277.60 1328.50 277.60 C1331.00 277.60 1333.50 278.12 1336.00 278.60 C1338.67 279.12 1341.33 280.63 1344.00 281.50 C1346.33 282.26 1348.67 283.60 1351.00 283.60 C1353.00 283.60 1355.00 283.30 1357.00 283.00 C1359.17 282.68 1361.33 281.80 1363.50 281.00 C1365.67 280.20 1367.83 278.93 1370.00 278.00 C1372.00 277.14 1374.00 275.60 1376.00 275.60 C1377.33 275.60 1378.67 276.68 1380.00 277.50 C1381.67 278.52 1383.33 280.72 1385.00 282.00 C1387.00 283.54 1389.00 285.88 1391.00 286.00 C1397.67 286.39 1404.33 286.10 1411.00 286.50 C1412.33 286.58 1413.67 288.02 1415.00 288.50 C1416.17 288.92 1417.33 289.28 1418.50 289.50 C1421.00 289.98 1423.50 289.95 1426.00 290.50 C1427.67 290.86 1429.33 292.17 1431.00 293.00 C1432.67 293.83 1434.33 295.14 1436.00 295.50 C1438.50 296.05 1441.00 295.96 1443.50 296.50 C1445.00 296.82 1446.50 298.11 1448.00 298.50 C1449.83 298.98 1451.67 299.20 1453.50 299.50 C1456.00 299.91 1458.50 300.06 1461.00 300.60 C1462.33 300.89 1463.67 301.37 1465.00 302.00 C1466.17 302.55 1467.33 303.49 1468.50 304.50 C1469.83 305.66 1471.17 307.51 1472.50 309.00 C1474.00 310.68 1475.50 314.00 1477.00 314.00 C1478.33 314.00 1479.67 312.83 1481.00 312.00 C1482.00 311.38 1483.00 309.60 1484.00 309.60 C1485.00 309.60 1486.00 309.75 1487.00 310.00 C1488.00 310.25 1489.00 313.38 1490.00 315.00 C1491.17 316.89 1492.33 319.27 1493.50 320.50 C1495.00 322.08 1496.50 322.95 1498.00 324.00 C1499.83 325.29 1501.67 325.90 1503.50 327.50 C1504.67 328.52 1505.83 330.52 1507.00 332.00 C1508.33 333.69 1509.67 336.53 1511.00 337.00 C1512.67 337.59 1514.33 337.78 1516.00 338.00 C1517.67 338.22 1519.33 338.25 1521.00 338.50 C1522.67 338.75 1524.33 339.75 1526.00 340.00 C1527.67 340.25 1529.33 340.34 1531.00 340.50 C1535.17 340.89 1539.33 341.06 1543.50 341.60 C1545.00 341.80 1546.50 342.21 1548.00 342.50 C1549.83 342.85 1551.67 342.99 1553.50 343.50 C1555.00 343.92 1556.50 345.35 1558.00 346.00 C1559.50 346.65 1561.00 347.60 1562.50 347.60 C1564.00 347.60 1565.50 346.53 1567.00 346.00 C1568.33 345.53 1569.67 344.60 1571.00 344.60 C1572.33 344.60 1573.67 346.10 1575.00 347.00 C1576.50 348.01 1578.00 350.50 1579.50 350.50 C1581.00 350.50 1582.50 349.50 1584.00 349.00 C1585.50 348.50 1587.00 347.50 1588.50 347.50 C1589.67 347.50 1590.83 347.83 1592.00 348.00 C1593.33 348.20 1594.67 348.40 1596.00 348.60" fill="none" stroke="#73bf69" stroke-width="1.1" stroke-linejoin="round"/>
<rect x="928" y="393.4" width="14" height="4" rx="1.5" fill="#73bf69"/>
</svg>
<svg style="position:absolute;left:0;top:0" width="1822" height="922" viewBox="0 0 1822 922">
<defs><linearGradient id="bg1" x1="0" y1="0" x2="0" y2="1" gradientUnits="userSpaceOnUse" ><stop offset="0" stop-color="#73bf69" stop-opacity="0.55"/><stop offset="1" stop-color="#73bf69" stop-opacity="0.05"/></linearGradient></defs>
<g stroke="rgba(225,230,245,0.082)" stroke-width="1" fill="none"><path d="M1006.5 472V616"/><path d="M1063.5 472V616"/><path d="M1119.5 472V616"/><path d="M1176.5 472V616"/><path d="M1232.5 472V616"/><path d="M1289.5 472V616"/><path d="M1345.5 472V616"/><path d="M1402.5 472V616"/><path d="M1459.5 472V616"/><path d="M1515.5 472V616"/><path d="M1572.5 472V616"/><path d="M1628.5 472V616"/><path d="M1685.5 472V616"/><path d="M1741.5 472V616"/><path d="M996 612.5H1791"/><path d="M996 566.5H1791"/><path d="M996 520.5H1791"/><path d="M996 473.5H1791"/></g>
<rect x="1001" y="610.5" width="17" height="2" fill="#73bf69" fill-opacity="0.95"/>
<linearGradient id="bg3" x1="0" y1="600.0" x2="0" y2="612" gradientUnits="userSpaceOnUse"><stop offset="0" stop-color="#73bf69" stop-opacity="0.12"/><stop offset="1" stop-color="#73bf69" stop-opacity="0.05"/></linearGradient>
<rect x="1029.5" y="600.5" width="16" height="11" rx="0.8" fill="url(#bg3)" stroke="#73bf69" stroke-width="1"/>
<rect x="1057" y="611.5" width="17" height="1" fill="#73bf69" fill-opacity="0.8"/>
<linearGradient id="bg5" x1="0" y1="581.2" x2="0" y2="612" gradientUnits="userSpaceOnUse"><stop offset="0" stop-color="#73bf69" stop-opacity="0.19"/><stop offset="1" stop-color="#73bf69" stop-opacity="0.05"/></linearGradient>
<rect x="1085.5" y="581.5" width="16" height="30" rx="0.8" fill="url(#bg5)" stroke="#73bf69" stroke-width="1"/>
<linearGradient id="bg6" x1="0" y1="546.2" x2="0" y2="612" gradientUnits="userSpaceOnUse"><stop offset="0" stop-color="#73bf69" stop-opacity="0.32"/><stop offset="1" stop-color="#73bf69" stop-opacity="0.05"/></linearGradient>
<rect x="1114.5" y="546.5" width="16" height="65" rx="0.8" fill="url(#bg6)" stroke="#73bf69" stroke-width="1"/>
<linearGradient id="bg7" x1="0" y1="484.3" x2="0" y2="612" gradientUnits="userSpaceOnUse"><stop offset="0" stop-color="#73bf69" stop-opacity="0.55"/><stop offset="1" stop-color="#73bf69" stop-opacity="0.05"/></linearGradient>
<rect x="1142.5" y="484.5" width="16" height="127" rx="0.8" fill="url(#bg7)" stroke="#73bf69" stroke-width="1"/>
<linearGradient id="bg8" x1="0" y1="605.0" x2="0" y2="612" gradientUnits="userSpaceOnUse"><stop offset="0" stop-color="#73bf69" stop-opacity="0.10"/><stop offset="1" stop-color="#73bf69" stop-opacity="0.05"/></linearGradient>
<rect x="1170.5" y="605.5" width="16" height="6" rx="0.8" fill="url(#bg8)" stroke="#73bf69" stroke-width="1"/>
<linearGradient id="bg9" x1="0" y1="573.3" x2="0" y2="612" gradientUnits="userSpaceOnUse"><stop offset="0" stop-color="#73bf69" stop-opacity="0.22"/><stop offset="1" stop-color="#73bf69" stop-opacity="0.05"/></linearGradient>
<rect x="1199.5" y="573.5" width="16" height="38" rx="0.8" fill="url(#bg9)" stroke="#73bf69" stroke-width="1"/>
<rect x="1227" y="611.5" width="17" height="1" fill="#73bf69" fill-opacity="0.45"/>
<rect x="1255" y="611.5" width="17" height="1" fill="#73bf69" fill-opacity="0.45"/>
<rect x="1283" y="611.5" width="17" height="1" fill="#73bf69" fill-opacity="0.45"/>
<rect x="1312" y="611.5" width="17" height="1" fill="#73bf69" fill-opacity="0.45"/>
<linearGradient id="bg14" x1="0" y1="610.4" x2="0" y2="612" gradientUnits="userSpaceOnUse"><stop offset="0" stop-color="#73bf69" stop-opacity="0.08"/><stop offset="1" stop-color="#73bf69" stop-opacity="0.05"/></linearGradient>
<rect x="1340.5" y="610.5" width="16" height="1" rx="0.8" fill="url(#bg14)" stroke="#73bf69" stroke-width="1"/>
<linearGradient id="bg15" x1="0" y1="599.0" x2="0" y2="612" gradientUnits="userSpaceOnUse"><stop offset="0" stop-color="#73bf69" stop-opacity="0.12"/><stop offset="1" stop-color="#73bf69" stop-opacity="0.05"/></linearGradient>
<rect x="1368.5" y="599.5" width="16" height="12" rx="0.8" fill="url(#bg15)" stroke="#73bf69" stroke-width="1"/>
<linearGradient id="bg16" x1="0" y1="568.9" x2="0" y2="612" gradientUnits="userSpaceOnUse"><stop offset="0" stop-color="#73bf69" stop-opacity="0.23"/><stop offset="1" stop-color="#73bf69" stop-opacity="0.05"/></linearGradient>
<rect x="1396.5" y="569.5" width="16" height="42" rx="0.8" fill="url(#bg16)" stroke="#73bf69" stroke-width="1"/>
<linearGradient id="bg17" x1="0" y1="606.0" x2="0" y2="612" gradientUnits="userSpaceOnUse"><stop offset="0" stop-color="#73bf69" stop-opacity="0.09"/><stop offset="1" stop-color="#73bf69" stop-opacity="0.05"/></linearGradient>
<rect x="1425.5" y="606.5" width="16" height="5" rx="0.8" fill="url(#bg17)" stroke="#73bf69" stroke-width="1"/>
<rect x="1453" y="611.5" width="17" height="1" fill="#73bf69" fill-opacity="0.45"/>
<rect x="1481" y="611.5" width="17" height="1" fill="#73bf69" fill-opacity="0.45"/>
<rect x="1509" y="611.5" width="17" height="1" fill="#73bf69" fill-opacity="0.45"/>
<linearGradient id="bg21" x1="0" y1="606.9" x2="0" y2="612" gradientUnits="userSpaceOnUse"><stop offset="0" stop-color="#73bf69" stop-opacity="0.09"/><stop offset="1" stop-color="#73bf69" stop-opacity="0.05"/></linearGradient>
<rect x="1538.5" y="607.5" width="16" height="4" rx="0.8" fill="url(#bg21)" stroke="#73bf69" stroke-width="1"/>
<rect x="1566" y="611.5" width="17" height="1" fill="#73bf69" fill-opacity="0.45"/>
<rect x="1594" y="611.5" width="17" height="1" fill="#73bf69" fill-opacity="0.45"/>
<linearGradient id="bg24" x1="0" y1="608.1" x2="0" y2="612" gradientUnits="userSpaceOnUse"><stop offset="0" stop-color="#73bf69" stop-opacity="0.08"/><stop offset="1" stop-color="#73bf69" stop-opacity="0.05"/></linearGradient>
<rect x="1622.5" y="608.5" width="16" height="3" rx="0.8" fill="url(#bg24)" stroke="#73bf69" stroke-width="1"/>
<rect x="1651" y="611.5" width="17" height="1" fill="#73bf69" fill-opacity="0.45"/>
<rect x="1679" y="611.5" width="17" height="1" fill="#73bf69" fill-opacity="0.45"/>
<linearGradient id="bg27" x1="0" y1="596.9" x2="0" y2="612" gradientUnits="userSpaceOnUse"><stop offset="0" stop-color="#73bf69" stop-opacity="0.13"/><stop offset="1" stop-color="#73bf69" stop-opacity="0.05"/></linearGradient>
<rect x="1707.5" y="597.5" width="16" height="14" rx="0.8" fill="url(#bg27)" stroke="#73bf69" stroke-width="1"/>
<linearGradient id="bg28" x1="0" y1="596.9" x2="0" y2="612" gradientUnits="userSpaceOnUse"><stop offset="0" stop-color="#73bf69" stop-opacity="0.13"/><stop offset="1" stop-color="#73bf69" stop-opacity="0.05"/></linearGradient>
<rect x="1735.5" y="597.5" width="16" height="14" rx="0.8" fill="url(#bg28)" stroke="#73bf69" stroke-width="1"/>
<linearGradient id="bg29" x1="0" y1="599.0" x2="0" y2="612" gradientUnits="userSpaceOnUse"><stop offset="0" stop-color="#73bf69" stop-opacity="0.12"/><stop offset="1" stop-color="#73bf69" stop-opacity="0.05"/></linearGradient>
<rect x="1764.5" y="599.5" width="16" height="12" rx="0.8" fill="url(#bg29)" stroke="#73bf69" stroke-width="1"/>
</svg>
<svg style="position:absolute;left:983.2px;top:431.5px" width="15.6" height="15.6" viewBox="-7.8 -7.8 15.6 15.6" fill="none" stroke="#6e9fff" stroke-width="1.4" stroke-linecap="round" stroke-linejoin="round"><circle cx="0" cy="0" r="6.1"/><path d="M0 -3.536 V0.3 H-2.856"/></svg>
<svg style="position:absolute;left:0;top:0" width="1822" height="922" viewBox="0 0 1822 922">
<g stroke="rgba(225,230,245,0.082)" stroke-width="1" fill="none"><path d="M1052.5 700V858"/><path d="M1190.5 700V858"/><path d="M1327.5 700V858"/><path d="M1467.5 700V858"/><path d="M1602.5 700V858"/><path d="M1740.5 700V858"/><path d="M963 818.5H1791"/><path d="M963 772.5H1791"/><path d="M963 726.5H1791"/></g>
<linearGradient id="tg" x1="0" y1="717" x2="0" y2="853.6" gradientUnits="userSpaceOnUse"><stop offset="0" stop-color="#73bf69" stop-opacity="0.22"/><stop offset="1" stop-color="#73bf69" stop-opacity="0.13"/></linearGradient>
<path d="M1713.0 853.6 L1713.02 772.05 C1714.18 787.38 1715.34 813.32 1716.49 818.06 C1717.48 822.08 1718.46 822.25 1719.44 825.35 C1720.31 828.08 1721.18 836.46 1722.05 836.46 C1722.69 836.46 1723.32 833.12 1723.96 828.82 C1724.65 824.13 1725.35 780.73 1726.04 780.73 C1726.91 780.73 1727.78 788.42 1728.65 794.62 C1729.40 799.99 1730.15 818.40 1730.90 818.40 C1731.60 818.40 1732.29 798.96 1732.99 798.96 C1733.85 798.96 1734.72 808.48 1735.59 811.46 C1736.46 814.43 1737.33 818.40 1738.19 818.40 C1738.66 818.40 1739.12 818.33 1739.58 818.23 C1740.39 818.05 1741.20 789.93 1742.01 789.93 C1742.77 789.93 1743.52 818.40 1744.27 818.40 C1745.02 818.40 1745.78 811.71 1746.53 806.25 C1747.51 799.11 1748.50 771.70 1749.48 771.70 C1751.62 771.70 1753.76 771.70 1755.90 771.70 C1756.66 771.70 1757.41 788.69 1758.16 789.24 C1758.74 789.66 1759.32 789.50 1759.90 789.93 C1760.65 790.49 1761.40 827.43 1762.15 827.43 C1763.14 827.43 1764.12 822.50 1765.10 818.40 C1765.68 815.99 1766.26 812.02 1766.84 807.99 C1767.53 803.15 1768.23 791.00 1768.92 790.45 C1769.79 789.77 1770.66 790.09 1771.53 789.41 C1772.28 788.82 1773.03 771.53 1773.78 771.53 C1774.48 771.53 1775.17 789.93 1775.87 789.93 C1776.50 789.93 1777.14 766.28 1777.78 761.11 C1778.76 753.13 1779.75 745.49 1780.73 745.49 C1781.48 745.49 1782.23 745.49 1782.99 745.49 C1783.68 745.49 1784.38 776.28 1785.07 786.81 C1785.65 795.58 1786.23 808.33 1786.81 808.33 C1787.38 808.33 1787.96 785.00 1788.54 769.44 C1789.06 755.44 1789.58 734.72 1790.10 717.36 L1790.1 853.6Z" fill="url(#tg)"/>
<path d="M1713.02 772.05 C1714.18 787.38 1715.34 813.32 1716.49 818.06 C1717.48 822.08 1718.46 822.25 1719.44 825.35 C1720.31 828.08 1721.18 836.46 1722.05 836.46 C1722.69 836.46 1723.32 833.12 1723.96 828.82 C1724.65 824.13 1725.35 780.73 1726.04 780.73 C1726.91 780.73 1727.78 788.42 1728.65 794.62 C1729.40 799.99 1730.15 818.40 1730.90 818.40 C1731.60 818.40 1732.29 798.96 1732.99 798.96 C1733.85 798.96 1734.72 808.48 1735.59 811.46 C1736.46 814.43 1737.33 818.40 1738.19 818.40 C1738.66 818.40 1739.12 818.33 1739.58 818.23 C1740.39 818.05 1741.20 789.93 1742.01 789.93 C1742.77 789.93 1743.52 818.40 1744.27 818.40 C1745.02 818.40 1745.78 811.71 1746.53 806.25 C1747.51 799.11 1748.50 771.70 1749.48 771.70 C1751.62 771.70 1753.76 771.70 1755.90 771.70 C1756.66 771.70 1757.41 788.69 1758.16 789.24 C1758.74 789.66 1759.32 789.50 1759.90 789.93 C1760.65 790.49 1761.40 827.43 1762.15 827.43 C1763.14 827.43 1764.12 822.50 1765.10 818.40 C1765.68 815.99 1766.26 812.02 1766.84 807.99 C1767.53 803.15 1768.23 791.00 1768.92 790.45 C1769.79 789.77 1770.66 790.09 1771.53 789.41 C1772.28 788.82 1773.03 771.53 1773.78 771.53 C1774.48 771.53 1775.17 789.93 1775.87 789.93 C1776.50 789.93 1777.14 766.28 1777.78 761.11 C1778.76 753.13 1779.75 745.49 1780.73 745.49 C1781.48 745.49 1782.23 745.49 1782.99 745.49 C1783.68 745.49 1784.38 776.28 1785.07 786.81 C1785.65 795.58 1786.23 808.33 1786.81 808.33 C1787.38 808.33 1787.96 785.00 1788.54 769.44 C1789.06 755.44 1789.58 734.72 1790.10 717.36" fill="none" stroke="#73bf69" stroke-width="2" stroke-linejoin="round" stroke-linecap="butt"/>
<rect x="928.5" y="887.8" width="13.5" height="4" rx="1.5" fill="#73bf69"/>
</svg>
<svg style="position:absolute;left:1019.3px;top:659.8px" width="15.4" height="15.4" viewBox="-7.7 -7.7 15.4 15.4" fill="none" stroke="#6e9fff" stroke-width="1.4" stroke-linecap="round" stroke-linejoin="round"><circle cx="0" cy="0" r="6.0"/><path d="M0 -3.4840000000000004 V0.3 H-2.814"/></svg>
<div id="tx">
<div class="t" style="left:722.00px;top:14.00px;font-size:14.7px;color:#92929f;letter-spacing:0.129px;-webkit-text-stroke:0.18px #92929f;">Suche oder springe zu ...</div>
<div class="t" style="left:1097.30px;top:15.00px;font-size:12.6px;color:#92929f;letter-spacing:0.449px;-webkit-text-stroke:0.18px #92929f;">ctrl+k</div>
<div class="t" style="left:55.40px;top:54.00px;font-size:14.7px;color:#ccccdc;letter-spacing:-0.129px;-webkit-text-stroke:0.18px #ccccdc;">Home</div>
<div class="t" style="left:118.90px;top:54.00px;font-size:14.7px;color:#ccccdc;letter-spacing:0.133px;-webkit-text-stroke:0.18px #ccccdc;">Dashboards</div>
<div class="t" style="left:223.40px;top:54.00px;font-size:14.7px;color:#9a9aa7;letter-spacing:0.298px;-webkit-text-stroke:0.18px #9a9aa7;">Wunderweather</div>
<div class="t" style="left:1290.10px;top:54.00px;font-size:14.7px;color:#6e9fff;letter-spacing:0.376px;-webkit-text-stroke:0.35px #6e9fff;">Hinzufügen</div>
<div class="t" style="left:1523.00px;top:54.00px;font-size:14.7px;color:#a2a2b0;letter-spacing:0.099px;-webkit-text-stroke:0.3px #a2a2b0;">Today</div>
<div class="t" style="left:1570.00px;top:55.00px;font-size:12.6px;color:#f0811a;-webkit-text-stroke:0.3px #f0811a;transform:scaleX(0.9347);transform-origin:0 0;">CEST</div>
<div class="t" style="left:1718.60px;top:54.00px;font-size:14.7px;color:#a2a2b0;letter-spacing:0.656px;-webkit-text-stroke:0.3px #a2a2b0;">30s</div>
<div class="t" style="left:27.40px;top:94.00px;font-size:29.4px;color:#ccccdc;letter-spacing:0.099px;-webkit-text-stroke:0.18px #ccccdc;">Luftdruck</div>
<div class="t" style="left:198.60px;top:95.00px;font-size:25.41px;color:#73bf69;-webkit-text-stroke:0.8px #73bf69;transform:scaleX(0.9242);transform-origin:0 0;">1011</div>
<div class="t" style="left:257.00px;top:98.00px;font-size:22.05px;color:#73bf69;letter-spacing:-1.817px;-webkit-text-stroke:0.6px #73bf69;">hPa</div>
<div class="t" style="left:402.60px;top:95.00px;font-size:21.42px;color:#ccccdc;letter-spacing:0.490px;-webkit-text-stroke:0.18px #ccccdc;">Luftfeuchttigkeit</div>
<div class="t" style="left:584.40px;top:95.00px;font-size:28.88px;color:#73bf69;letter-spacing:-1.268px;-webkit-text-stroke:0.8px #73bf69;">67.0</div>
<div class="t" style="left:643.60px;top:105.00px;font-size:17.32px;color:#73bf69;-webkit-text-stroke:0.55px #73bf69;transform:scaleX(0.8815);transform-origin:0 0;">%H</div>
<div class="t" style="left:774.20px;top:90.00px;font-size:14.7px;color:#ccccdc;letter-spacing:0.345px;-webkit-text-stroke:0.42px #ccccdc;">Temperatur</div>
<div class="t" style="left:773.60px;top:122.00px;font-size:19.64px;color:#ccccdc;letter-spacing:-0.174px;-webkit-text-stroke:0.18px #ccccdc;">Aussen</div>
<div class="t" style="left:970.40px;top:123.00px;font-size:24.15px;color:#73bf69;letter-spacing:0.067px;-webkit-text-stroke:0.7px #73bf69;">20.5</div>
<div class="t" style="left:1025.00px;top:128.00px;font-size:18.79px;color:#73bf69;letter-spacing:0.522px;-webkit-text-stroke:0.55px #73bf69;">C°</div>
<div class="t" style="left:1449.40px;top:90.00px;font-size:14.7px;color:#ccccdc;letter-spacing:0.110px;-webkit-text-stroke:0.42px #ccccdc;">Wind</div>
<div class="t" style="left:1593.60px;top:147.00px;font-size:21.42px;color:#ccccdc;letter-spacing:-0.577px;-webkit-text-stroke:0.18px #ccccdc;">Speed</div>
<div class="t" style="left:23.40px;top:204.00px;font-size:14.7px;color:#ccccdc;letter-spacing:0.328px;-webkit-text-stroke:0.42px #ccccdc;">Wind km/h</div>
<div class="t" style="left:27.30px;top:392.00px;font-size:12.6px;color:#c7c7d7;letter-spacing:0.286px;-webkit-text-stroke:0.18px #c7c7d7;">0.0 km/h</div>
<div class="t" style="left:27.80px;top:344.00px;font-size:12.6px;color:#c7c7d7;letter-spacing:0.215px;-webkit-text-stroke:0.18px #c7c7d7;">5.0 km/h</div>
<div class="t" style="left:22.30px;top:295.00px;font-size:12.6px;color:#c7c7d7;-webkit-text-stroke:0.18px #c7c7d7;">10.0 km/h</div>
<div class="t" style="left:22.60px;top:247.00px;font-size:12.6px;color:#c7c7d7;letter-spacing:-0.039px;-webkit-text-stroke:0.18px #c7c7d7;">15.0 km/h</div>
<div class="t" style="left:70.40px;top:407.00px;font-size:12.6px;color:#c7c7d7;letter-spacing:0.546px;-webkit-text-stroke:0.18px #c7c7d7;">00:00</div>
<div class="t" style="left:137.36px;top:407.00px;font-size:12.6px;color:#c7c7d7;letter-spacing:0.546px;-webkit-text-stroke:0.18px #c7c7d7;">02:00</div>
<div class="t" style="left:204.32px;top:407.00px;font-size:12.6px;color:#c7c7d7;letter-spacing:0.546px;-webkit-text-stroke:0.18px #c7c7d7;">04:00</div>
<div class="t" style="left:271.28px;top:407.00px;font-size:12.6px;color:#c7c7d7;letter-spacing:0.546px;-webkit-text-stroke:0.18px #c7c7d7;">06:00</div>
<div class="t" style="left:338.24px;top:407.00px;font-size:12.6px;color:#c7c7d7;letter-spacing:0.546px;-webkit-text-stroke:0.18px #c7c7d7;">08:00</div>
<div class="t" style="left:405.20px;top:407.00px;font-size:12.6px;color:#c7c7d7;letter-spacing:0.546px;-webkit-text-stroke:0.18px #c7c7d7;">10:00</div>
<div class="t" style="left:472.16px;top:407.00px;font-size:12.6px;color:#c7c7d7;letter-spacing:0.546px;-webkit-text-stroke:0.18px #c7c7d7;">12:00</div>
<div class="t" style="left:539.12px;top:407.00px;font-size:12.6px;color:#c7c7d7;letter-spacing:0.546px;-webkit-text-stroke:0.18px #c7c7d7;">14:00</div>
<div class="t" style="left:606.08px;top:407.00px;font-size:12.6px;color:#c7c7d7;letter-spacing:0.546px;-webkit-text-stroke:0.18px #c7c7d7;">16:00</div>
<div class="t" style="left:673.04px;top:407.00px;font-size:12.6px;color:#c7c7d7;letter-spacing:0.546px;-webkit-text-stroke:0.18px #c7c7d7;">18:00</div>
<div class="t" style="left:740.00px;top:407.00px;font-size:12.6px;color:#c7c7d7;letter-spacing:0.546px;-webkit-text-stroke:0.18px #c7c7d7;">20:00</div>
<div class="t" style="left:806.96px;top:407.00px;font-size:12.6px;color:#c7c7d7;letter-spacing:0.546px;-webkit-text-stroke:0.18px #c7c7d7;">22:00</div>
<div class="t" style="left:49.30px;top:427.00px;font-size:12.6px;color:#c7c7d7;letter-spacing:-0.155px;-webkit-text-stroke:0.18px #c7c7d7;">Speed</div>
<div class="t" style="left:94.30px;top:427.00px;font-size:12.6px;color:#c7c7d7;letter-spacing:0.024px;-webkit-text-stroke:0.18px #c7c7d7;">Max: 14.0 km/h</div>
<div class="t" style="left:190.10px;top:427.00px;font-size:12.6px;color:#c7c7d7;letter-spacing:0.233px;-webkit-text-stroke:0.18px #c7c7d7;">Last *: 4.0 km/h</div>
<div class="t" style="left:23.50px;top:470.00px;font-size:14.7px;color:#ccccdc;letter-spacing:-0.320px;-webkit-text-stroke:0.42px #ccccdc;">Regen</div>
<div class="t" style="left:30.70px;top:620.00px;font-size:12.6px;color:#c7c7d7;letter-spacing:-0.104px;-webkit-text-stroke:0.18px #c7c7d7;">0.0 L</div>
<div class="t" style="left:25.10px;top:569.00px;font-size:12.6px;color:#c7c7d7;letter-spacing:-0.363px;-webkit-text-stroke:0.18px #c7c7d7;">10.0 L</div>
<div class="t" style="left:23.10px;top:518.00px;font-size:12.6px;color:#c7c7d7;letter-spacing:0.037px;-webkit-text-stroke:0.18px #c7c7d7;">20.0 L</div>
<div class="t" style="left:51.65px;top:635.00px;font-size:12.6px;color:#c7c7d7;letter-spacing:0.546px;-webkit-text-stroke:0.18px #c7c7d7;">00:00</div>
<div class="t" style="left:120.20px;top:635.00px;font-size:12.6px;color:#c7c7d7;letter-spacing:0.546px;-webkit-text-stroke:0.18px #c7c7d7;">02:00</div>
<div class="t" style="left:188.75px;top:635.00px;font-size:12.6px;color:#c7c7d7;letter-spacing:0.546px;-webkit-text-stroke:0.18px #c7c7d7;">04:00</div>
<div class="t" style="left:257.30px;top:635.00px;font-size:12.6px;color:#c7c7d7;letter-spacing:0.546px;-webkit-text-stroke:0.18px #c7c7d7;">06:00</div>
<div class="t" style="left:325.85px;top:635.00px;font-size:12.6px;color:#c7c7d7;letter-spacing:0.546px;-webkit-text-stroke:0.18px #c7c7d7;">08:00</div>
<div class="t" style="left:394.40px;top:635.00px;font-size:12.6px;color:#c7c7d7;letter-spacing:0.546px;-webkit-text-stroke:0.18px #c7c7d7;">10:00</div>
<div class="t" style="left:462.95px;top:635.00px;font-size:12.6px;color:#c7c7d7;letter-spacing:0.546px;-webkit-text-stroke:0.18px #c7c7d7;">12:00</div>
<div class="t" style="left:531.50px;top:635.00px;font-size:12.6px;color:#c7c7d7;letter-spacing:0.546px;-webkit-text-stroke:0.18px #c7c7d7;">14:00</div>
<div class="t" style="left:600.05px;top:635.00px;font-size:12.6px;color:#c7c7d7;letter-spacing:0.546px;-webkit-text-stroke:0.18px #c7c7d7;">16:00</div>
<div class="t" style="left:668.60px;top:635.00px;font-size:12.6px;color:#c7c7d7;letter-spacing:0.546px;-webkit-text-stroke:0.18px #c7c7d7;">18:00</div>
<div class="t" style="left:737.15px;top:635.00px;font-size:12.6px;color:#c7c7d7;letter-spacing:0.546px;-webkit-text-stroke:0.18px #c7c7d7;">20:00</div>
<div class="t" style="left:805.70px;top:635.00px;font-size:12.6px;color:#c7c7d7;letter-spacing:0.546px;-webkit-text-stroke:0.18px #c7c7d7;">22:00</div>
<div class="t" style="left:48.90px;top:655.00px;font-size:12.6px;color:#c7c7d7;letter-spacing:0.498px;-webkit-text-stroke:0.18px #c7c7d7;">l/Tag</div>
<div class="t" style="left:86.00px;top:655.00px;font-size:12.6px;color:#c7c7d7;letter-spacing:0.039px;-webkit-text-stroke:0.18px #c7c7d7;">Max: 20.8 L</div>
<div class="t" style="left:161.10px;top:655.00px;font-size:12.6px;color:#c7c7d7;letter-spacing:0.207px;-webkit-text-stroke:0.18px #c7c7d7;">Last *: 6.9 L</div>
<div class="t" style="left:263.00px;top:655.00px;font-size:12.6px;color:#c7c7d7;letter-spacing:0.444px;-webkit-text-stroke:0.18px #c7c7d7;">l/h</div>
<div class="t" style="left:286.10px;top:655.00px;font-size:12.6px;color:#c7c7d7;letter-spacing:-0.057px;-webkit-text-stroke:0.18px #c7c7d7;">Max: 6.0 L</div>
<div class="t" style="left:353.60px;top:655.00px;font-size:12.6px;color:#c7c7d7;letter-spacing:0.132px;-webkit-text-stroke:0.18px #c7c7d7;">Last *: 0.0 L</div>
<div class="t" style="left:23.40px;top:698.00px;font-size:14.7px;color:#ccccdc;letter-spacing:0.342px;-webkit-text-stroke:0.42px #ccccdc;">Niederschlag</div>
<div class="t" style="left:149.50px;top:698.00px;font-size:14.7px;color:#6e9fff;letter-spacing:0.226px;-webkit-text-stroke:0.18px #6e9fff;">Last 12 months timeshift -1h</div>
<div class="t" style="left:57.20px;top:824.00px;font-size:12.6px;color:#c7c7d7;letter-spacing:-0.158px;-webkit-text-stroke:0.18px #c7c7d7;">0 L</div>
<div class="t" style="left:57.60px;top:791.00px;font-size:12.6px;color:#c7c7d7;letter-spacing:-0.358px;-webkit-text-stroke:0.18px #c7c7d7;">5 L</div>
<div class="t" style="left:51.60px;top:758.00px;font-size:12.6px;color:#c7c7d7;letter-spacing:-0.572px;-webkit-text-stroke:0.18px #c7c7d7;">10 L</div>
<div class="t" style="left:49.30px;top:845.00px;font-size:12.6px;color:#c7c7d7;letter-spacing:0.467px;-webkit-text-stroke:0.18px #c7c7d7;">05/20 02:00</div>
<div class="t" style="left:167.44px;top:845.00px;font-size:12.6px;color:#c7c7d7;letter-spacing:0.467px;-webkit-text-stroke:0.18px #c7c7d7;">05/25 02:00</div>
<div class="t" style="left:285.58px;top:845.00px;font-size:12.6px;color:#c7c7d7;letter-spacing:0.467px;-webkit-text-stroke:0.18px #c7c7d7;">05/30 02:00</div>
<div class="t" style="left:403.72px;top:845.00px;font-size:12.6px;color:#c7c7d7;letter-spacing:0.467px;-webkit-text-stroke:0.18px #c7c7d7;">06/04 02:00</div>
<div class="t" style="left:521.86px;top:845.00px;font-size:12.6px;color:#c7c7d7;letter-spacing:0.467px;-webkit-text-stroke:0.18px #c7c7d7;">06/09 02:00</div>
<div class="t" style="left:640.00px;top:845.00px;font-size:12.6px;color:#c7c7d7;letter-spacing:0.467px;-webkit-text-stroke:0.18px #c7c7d7;">06/14 02:00</div>
<div class="t" style="left:758.14px;top:845.00px;font-size:12.6px;color:#c7c7d7;letter-spacing:0.467px;-webkit-text-stroke:0.18px #c7c7d7;">06/19 02:00</div>
<div class="t" style="left:-20.86px;top:778.00px;font-size:12.6px;color:#c7c7d7;letter-spacing:0.214px;-webkit-text-stroke:0.18px #c7c7d7;transform:rotate(-90deg);">Durchnitt Pro Tag</div>
<div class="t" style="left:924.40px;top:204.00px;font-size:14.7px;color:#ccccdc;letter-spacing:0.571px;-webkit-text-stroke:0.42px #ccccdc;">Luftfeuchte</div>
<div class="t" style="left:923.50px;top:246.00px;font-size:12.6px;color:#c7c7d7;letter-spacing:-0.436px;-webkit-text-stroke:0.18px #c7c7d7;">100.0 %</div>
<div class="t" style="left:928.90px;top:304.00px;font-size:12.6px;color:#c7c7d7;letter-spacing:-0.204px;-webkit-text-stroke:0.18px #c7c7d7;">80.0 %</div>
<div class="t" style="left:960.45px;top:369.00px;font-size:12.6px;color:#c7c7d7;letter-spacing:0.546px;-webkit-text-stroke:0.18px #c7c7d7;">00:00</div>
<div class="t" style="left:1028.20px;top:369.00px;font-size:12.6px;color:#c7c7d7;letter-spacing:0.546px;-webkit-text-stroke:0.18px #c7c7d7;">02:00</div>
<div class="t" style="left:1095.95px;top:369.00px;font-size:12.6px;color:#c7c7d7;letter-spacing:0.546px;-webkit-text-stroke:0.18px #c7c7d7;">04:00</div>
<div class="t" style="left:1163.70px;top:369.00px;font-size:12.6px;color:#c7c7d7;letter-spacing:0.546px;-webkit-text-stroke:0.18px #c7c7d7;">06:00</div>
<div class="t" style="left:1231.45px;top:369.00px;font-size:12.6px;color:#c7c7d7;letter-spacing:0.546px;-webkit-text-stroke:0.18px #c7c7d7;">08:00</div>
<div class="t" style="left:1299.20px;top:369.00px;font-size:12.6px;color:#c7c7d7;letter-spacing:0.546px;-webkit-text-stroke:0.18px #c7c7d7;">10:00</div>
<div class="t" style="left:1366.95px;top:369.00px;font-size:12.6px;color:#c7c7d7;letter-spacing:0.546px;-webkit-text-stroke:0.18px #c7c7d7;">12:00</div>
<div class="t" style="left:1434.70px;top:369.00px;font-size:12.6px;color:#c7c7d7;letter-spacing:0.546px;-webkit-text-stroke:0.18px #c7c7d7;">14:00</div>
<div class="t" style="left:1502.45px;top:369.00px;font-size:12.6px;color:#c7c7d7;letter-spacing:0.546px;-webkit-text-stroke:0.18px #c7c7d7;">16:00</div>
<div class="t" style="left:1570.20px;top:369.00px;font-size:12.6px;color:#c7c7d7;letter-spacing:0.546px;-webkit-text-stroke:0.18px #c7c7d7;">18:00</div>
<div class="t" style="left:1637.95px;top:369.00px;font-size:12.6px;color:#c7c7d7;letter-spacing:0.546px;-webkit-text-stroke:0.18px #c7c7d7;">20:00</div>
<div class="t" style="left:1705.70px;top:369.00px;font-size:12.6px;color:#c7c7d7;letter-spacing:0.546px;-webkit-text-stroke:0.18px #c7c7d7;">22:00</div>
<div class="t" style="left:950.10px;top:389.00px;font-size:12.6px;color:#c7c7d7;letter-spacing:0.372px;-webkit-text-stroke:0.18px #c7c7d7;">Luftfeuchtigkeit</div>
<div class="t" style="left:1049.30px;top:389.00px;font-size:12.6px;color:#c7c7d7;letter-spacing:-0.279px;-webkit-text-stroke:0.18px #c7c7d7;">Last *: 67.1 %</div>
<div class="t" style="left:924.40px;top:432.00px;font-size:14.7px;color:#ccccdc;letter-spacing:-0.320px;-webkit-text-stroke:0.42px #ccccdc;">Regen</div>
<div class="t" style="left:1003.60px;top:432.00px;font-size:14.7px;color:#6e9fff;letter-spacing:0.188px;-webkit-text-stroke:0.18px #6e9fff;">Last 4 weeks</div>
<div class="t" style="left:951.60px;top:606.00px;font-size:12.6px;color:#c7c7d7;letter-spacing:0.057px;-webkit-text-stroke:0.18px #c7c7d7;">0.0 mL</div>
<div class="t" style="left:955.20px;top:560.00px;font-size:12.6px;color:#c7c7d7;letter-spacing:0.037px;-webkit-text-stroke:0.18px #c7c7d7;">20.0 L</div>
<div class="t" style="left:954.20px;top:514.00px;font-size:12.6px;color:#c7c7d7;letter-spacing:0.237px;-webkit-text-stroke:0.18px #c7c7d7;">40.0 L</div>
<div class="t" style="left:954.40px;top:467.00px;font-size:12.6px;color:#c7c7d7;letter-spacing:0.197px;-webkit-text-stroke:0.18px #c7c7d7;">60.0 L</div>
<div class="t" style="left:989.35px;top:621.00px;font-size:12.6px;color:#c7c7d7;letter-spacing:0.496px;-webkit-text-stroke:0.18px #c7c7d7;">05/27</div>
<div class="t" style="left:1045.90px;top:621.00px;font-size:12.6px;color:#c7c7d7;letter-spacing:0.496px;-webkit-text-stroke:0.18px #c7c7d7;">05/29</div>
<div class="t" style="left:1102.45px;top:621.00px;font-size:12.6px;color:#c7c7d7;letter-spacing:0.496px;-webkit-text-stroke:0.18px #c7c7d7;">05/31</div>
<div class="t" style="left:1159.00px;top:621.00px;font-size:12.6px;color:#c7c7d7;letter-spacing:0.496px;-webkit-text-stroke:0.18px #c7c7d7;">06/02</div>
<div class="t" style="left:1215.55px;top:621.00px;font-size:12.6px;color:#c7c7d7;letter-spacing:0.496px;-webkit-text-stroke:0.18px #c7c7d7;">06/04</div>
<div class="t" style="left:1272.10px;top:621.00px;font-size:12.6px;color:#c7c7d7;letter-spacing:0.496px;-webkit-text-stroke:0.18px #c7c7d7;">06/06</div>
<div class="t" style="left:1328.65px;top:621.00px;font-size:12.6px;color:#c7c7d7;letter-spacing:0.496px;-webkit-text-stroke:0.18px #c7c7d7;">06/08</div>
<div class="t" style="left:1385.20px;top:621.00px;font-size:12.6px;color:#c7c7d7;letter-spacing:0.496px;-webkit-text-stroke:0.18px #c7c7d7;">06/10</div>
<div class="t" style="left:1441.75px;top:621.00px;font-size:12.6px;color:#c7c7d7;letter-spacing:0.496px;-webkit-text-stroke:0.18px #c7c7d7;">06/12</div>
<div class="t" style="left:1498.30px;top:621.00px;font-size:12.6px;color:#c7c7d7;letter-spacing:0.496px;-webkit-text-stroke:0.18px #c7c7d7;">06/14</div>
<div class="t" style="left:1554.85px;top:621.00px;font-size:12.6px;color:#c7c7d7;letter-spacing:0.496px;-webkit-text-stroke:0.18px #c7c7d7;">06/16</div>
<div class="t" style="left:1611.40px;top:621.00px;font-size:12.6px;color:#c7c7d7;letter-spacing:0.496px;-webkit-text-stroke:0.18px #c7c7d7;">06/18</div>
<div class="t" style="left:1667.95px;top:621.00px;font-size:12.6px;color:#c7c7d7;letter-spacing:0.496px;-webkit-text-stroke:0.18px #c7c7d7;">06/20</div>
<div class="t" style="left:1724.50px;top:621.00px;font-size:12.6px;color:#c7c7d7;letter-spacing:0.496px;-webkit-text-stroke:0.18px #c7c7d7;">06/22</div>
<div class="t" style="left:909.78px;top:536.00px;font-size:12.6px;color:#c7c7d7;letter-spacing:0.236px;-webkit-text-stroke:0.18px #c7c7d7;transform:rotate(-90deg);">pro Tag</div>
<div class="t" style="left:925.20px;top:660.00px;font-size:14.7px;color:#ccccdc;letter-spacing:0.345px;-webkit-text-stroke:0.42px #ccccdc;">Temperatur</div>
<div class="t" style="left:1039.70px;top:660.00px;font-size:14.7px;color:#6e9fff;letter-spacing:0.226px;-webkit-text-stroke:0.18px #6e9fff;">Last 12 months timeshift -1h</div>
<div class="t" style="left:924.40px;top:812.00px;font-size:12.6px;color:#c7c7d7;letter-spacing:0.040px;-webkit-text-stroke:0.18px #c7c7d7;">10 °C</div>
<div class="t" style="left:924.40px;top:766.00px;font-size:12.6px;color:#c7c7d7;letter-spacing:0.040px;-webkit-text-stroke:0.18px #c7c7d7;">15 °C</div>
<div class="t" style="left:924.40px;top:720.00px;font-size:12.6px;color:#c7c7d7;letter-spacing:0.040px;-webkit-text-stroke:0.18px #c7c7d7;">20 °C</div>
<div class="t" style="left:1027.10px;top:863.00px;font-size:12.6px;color:#c7c7d7;letter-spacing:0.697px;-webkit-text-stroke:0.18px #c7c7d7;">2023-08</div>
<div class="t" style="left:1165.00px;top:863.00px;font-size:12.6px;color:#c7c7d7;letter-spacing:0.697px;-webkit-text-stroke:0.18px #c7c7d7;">2023-10</div>
<div class="t" style="left:1302.00px;top:863.00px;font-size:12.6px;color:#c7c7d7;letter-spacing:0.697px;-webkit-text-stroke:0.18px #c7c7d7;">2023-12</div>
<div class="t" style="left:1442.00px;top:863.00px;font-size:12.6px;color:#c7c7d7;letter-spacing:0.697px;-webkit-text-stroke:0.18px #c7c7d7;">2024-02</div>
<div class="t" style="left:1577.00px;top:863.00px;font-size:12.6px;color:#c7c7d7;letter-spacing:0.697px;-webkit-text-stroke:0.18px #c7c7d7;">2024-04</div>
<div class="t" style="left:1715.00px;top:863.00px;font-size:12.6px;color:#c7c7d7;letter-spacing:0.697px;-webkit-text-stroke:0.18px #c7c7d7;">2024-06</div>
<div class="t" style="left:950.10px;top:883.00px;font-size:12.6px;color:#c7c7d7;letter-spacing:0.102px;-webkit-text-stroke:0.18px #c7c7d7;">Pro Tag</div>
</div>
</div>
</body></html>
